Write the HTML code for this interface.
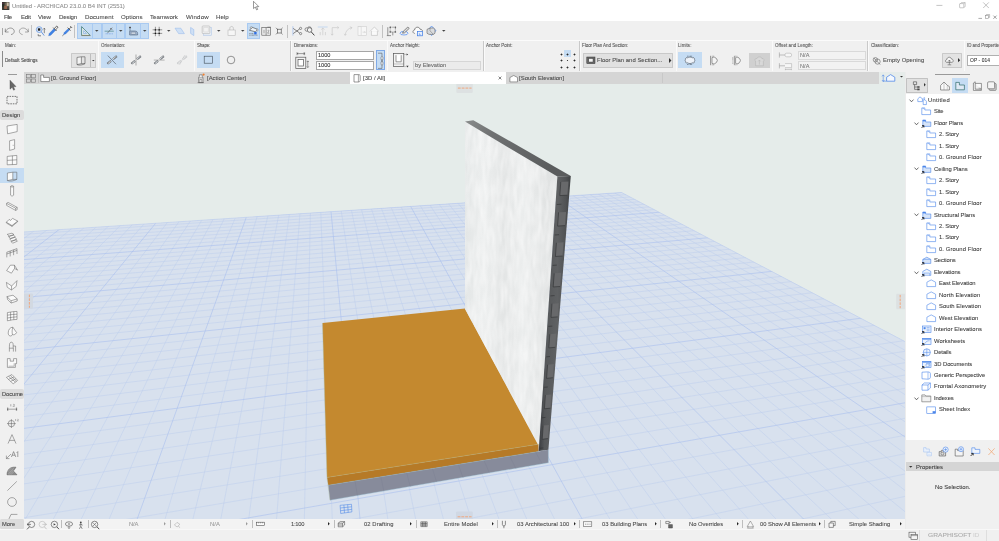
<!DOCTYPE html>
<html><head><meta charset="utf-8"><title>Untitled - ARCHICAD 23.0.0 B4 INT (2551)</title>
<style>
html,body{margin:0;padding:0;background:#f0f0f0;overflow:hidden}
#app{position:relative;width:999px;height:541px;overflow:hidden;background:#f0f0f0;font-family:"Liberation Sans",sans-serif}
.r{position:absolute;box-sizing:border-box}
.t{position:absolute;white-space:nowrap;transform-origin:0 0;-webkit-text-stroke:0.08px currentColor;font-family:"Liberation Sans",sans-serif}
svg{overflow:visible}
</style></head><body><div id="app">
<div class="r" style="left:0.00px;top:0.00px;width:999.00px;height:21.20px;background:#ffffff;"></div>
<div class="r" style="left:0.00px;top:21.20px;width:999.00px;height:50.80px;background:#f0f0f0;"></div>
<div class="r" style="left:0.00px;top:40.00px;width:999.00px;height:1.00px;background:#fbfbfb;"></div>
<div class="r" style="left:0.00px;top:72.00px;width:879.00px;height:11.60px;background:#d5d5d5;"></div>
<div class="r" style="left:0.00px;top:72.00px;width:24.00px;height:447.00px;background:#f0f0f0;"></div>
<div class="r" style="left:905.00px;top:72.00px;width:94.00px;height:457.00px;background:#f0f0f0;"></div>
<div class="r" style="left:0.00px;top:519.00px;width:905.00px;height:10.30px;background:#f0f0f0;"></div>
<div class="r" style="left:0.00px;top:529.00px;width:999.00px;height:12.00px;background:#f0f0f0;"></div>
<div class="r" style="left:879.00px;top:72.00px;width:26.30px;height:12.00px;background:#e6ecea;"></div>
<div class="r" style="left:24px;top:83.6px;width:881.2px;height:435.4px;background:#e5ecea;overflow:hidden"><svg width="881.2" height="435.4" viewBox="0 0 881.2 435.4" style="position:absolute;left:0;top:0;overflow:hidden"><defs>
<linearGradient id="wg" x1="0" y1="0" x2="1" y2="0"><stop offset="0" stop-color="#e3e6e6"/><stop offset="0.2" stop-color="#eceeee"/><stop offset="0.42" stop-color="#e3e5e5"/><stop offset="0.62" stop-color="#ebeded"/><stop offset="0.85" stop-color="#e2e4e4"/><stop offset="1" stop-color="#dfe1e1"/></linearGradient>
<linearGradient id="sg" x1="0" y1="0" x2="1" y2="0.04"><stop offset="0" stop-color="#34363a"/><stop offset="0.22" stop-color="#56585a"/><stop offset="0.6" stop-color="#5f6163"/><stop offset="0.85" stop-color="#505254"/><stop offset="1" stop-color="#3e4042"/></linearGradient>
<linearGradient id="tg" x1="0" y1="0" x2="1" y2="0.5"><stop offset="0" stop-color="#8a8c8c"/><stop offset="0.3" stop-color="#6f7172"/><stop offset="1" stop-color="#5a5c5d"/></linearGradient>
<filter id="tx" x="0" y="0" width="1" height="1"><feTurbulence type="fractalNoise" baseFrequency="0.22 0.05" numOctaves="2" seed="4"/><feColorMatrix type="matrix" values="0 0 0 0 1  0 0 0 0 1  0 0 0 0 1  1.8 0 0 0 -0.5"/><feComposite operator="in" in2="SourceGraphic"/></filter>
</defs><clipPath id="gc"><polygon points="0.0,148.0 597.6,108.5 881.2,257.7 881.2,435.4 0.0,435.4"/></clipPath><polygon points="0.0,148.0 597.6,108.5 881.2,257.7 881.2,435.4 0.0,435.4" fill="#d8e1ee"/><g clip-path="url(#gc)"><path d="M590.5 108.9L2836.6 1325.6M582.3 109.4L2758.6 1325.3M574.1 109.9L2680.6 1325.0M565.8 110.5L2602.7 1324.7M557.4 111.0L2524.7 1324.4M549.0 111.6L2446.7 1324.1M540.5 112.1L2368.7 1323.8M523.4 113.2L2212.7 1323.2M514.7 113.8L2134.8 1322.9M506.0 114.3L2056.8 1322.6M497.2 114.9L1978.8 1322.4M488.3 115.5L1900.8 1322.1M479.4 116.1L1822.8 1321.8M470.4 116.6L1744.8 1321.5M452.3 117.8L1588.9 1320.9M443.1 118.4L1510.9 1320.6M433.8 119.0L1432.9 1320.3M424.5 119.6L1354.9 1320.0M415.1 120.2L1276.9 1319.7M405.7 120.8L1198.9 1319.4M396.1 121.5L1121.0 1319.2M376.9 122.7L965.0 1318.6M367.1 123.3L887.0 1318.3M357.3 124.0L809.0 1318.0M347.4 124.6L731.0 1317.7M337.4 125.3L653.0 1317.4M327.4 125.9L575.1 1317.1M317.2 126.6L497.1 1316.8M296.8 127.9L341.1 1316.2M286.4 128.6L263.1 1316.0M276.0 129.2L185.1 1315.7M265.4 129.9L107.2 1315.4M254.8 130.6L29.2 1315.1M244.1 131.3L-48.8 1314.8M233.3 132.0L-126.8 1314.5M211.5 133.4L-282.8 1313.9M200.5 134.1L-360.8 1313.6M189.3 134.9L-438.7 1313.3M178.1 135.6L-516.7 1313.0M166.8 136.3L-594.7 1312.8M155.4 137.1L-672.7 1312.5M143.9 137.8L-750.7 1312.2M120.6 139.3L-906.6 1311.6M108.8 140.1L-984.6 1311.3M97.0 140.8L-1062.6 1311.0M85.0 141.6L-1140.6 1310.7M72.9 142.4L-1218.6 1310.4M60.7 143.2L-1296.6 1310.1M48.4 144.0L-1374.6 1309.8M23.5 145.6L-1530.5 1309.3M10.9 146.4L-1608.5 1309.0M-1.8 147.2L-1686.5 1308.7M-14.7 148.1L-1764.5 1308.4M-27.6 148.9L-1842.5 1308.1M-40.7 149.8L-1920.4 1307.8M-53.9 150.6L-1998.4 1307.5M-80.6 152.3L-2154.4 1306.9M-94.1 153.2L-2232.4 1306.6M-107.7 154.1L-2310.4 1306.4M-121.5 155.0L-2388.4 1306.1M-135.4 155.9L-2466.3 1305.8M-149.4 156.8L-2544.3 1305.5M-163.6 157.7L-2622.3 1305.2M-192.3 159.6L-2778.3 1304.6M-206.8 160.5L-2856.3 1304.3M-221.5 161.5L-2934.2 1304.0M-236.3 162.4L-3012.2 1303.7M-251.3 163.4L-3090.2 1303.4M-266.4 164.4L-3168.2 1303.2M-281.6 165.4L-3246.2 1302.9M-312.5 167.4L-3402.2 1302.3M-328.2 168.4L-3480.1 1302.0M-344.0 169.4L-3558.1 1301.7M-360.0 170.4L-3636.1 1301.4M-376.2 171.5L-3714.1 1301.1M-392.5 172.5L-3792.1 1300.8M-408.9 173.6L-3870.1 1300.5M-442.3 175.8L-4026.0 1300.0M-459.3 176.9L-4104.0 1299.7M-474.4 181.5L602.9 110.6M-490.2 186.4L607.3 112.9M-506.6 191.4L611.8 115.3M-523.7 196.7L616.5 117.7M-541.5 202.2L621.3 120.2M-560.2 208.0L626.2 122.8M-579.7 214.0L631.3 125.5M-621.6 226.9L641.9 131.1M-644.0 233.8L647.4 134.0M-667.7 241.1L653.2 137.0M-692.5 248.7L659.1 140.1M-718.7 256.8L665.2 143.3M-746.2 265.3L671.5 146.6M-775.4 274.2L678.1 150.1M-838.9 293.8L691.9 157.3M-873.6 304.5L699.1 161.2M-910.4 315.8L706.7 165.1M-949.7 327.9L714.5 169.2M-991.6 340.9L722.6 173.5M-1036.5 354.7L731.0 177.9M-1084.7 369.5L739.8 182.5M-1192.2 402.7L758.4 192.3M-1252.6 421.2L768.3 197.5M-1318.1 441.4L778.7 203.0M-1389.3 463.4L789.5 208.6M-1467.2 487.4L800.7 214.6M-1552.7 513.7L812.5 220.8M-1646.9 542.7L824.9 227.3M-1867.5 610.7L851.4 241.2M-1997.8 650.8L865.7 248.7M-2144.9 696.1L880.7 256.6M-2312.1 747.7L896.6 265.0M-2504.1 806.8L913.3 273.7M-2726.5 875.3L931.0 283.0M-2987.5 955.7L949.6 292.8M-3673.3 1167.0L990.5 314.3M-4084.6 1299.7L1012.9 326.1M-3776.0 1300.9L1036.7 338.6M-3467.4 1302.0L1062.2 352.0M-3158.8 1303.2L1089.5 366.4M-2850.2 1304.3L1118.8 381.8M-2541.6 1305.5L1150.3 398.3M-1924.4 1307.8L1221.1 435.5M-1615.8 1308.9L1261.0 456.6M-1307.2 1310.1L1304.6 479.4M-998.6 1311.2L1352.2 504.5M-690.0 1312.4L1404.5 532.0M-381.4 1313.6L1462.3 562.3M-72.8 1314.7L1526.3 596.0M544.4 1317.0L1678.0 675.8M852.9 1318.2L1768.7 723.4M1161.5 1319.3L1872.1 777.8M1470.1 1320.5L1991.0 840.3M1778.7 1321.6L2129.3 913.0M2087.3 1322.8L2292.1 998.6M2395.9 1323.9L2486.4 1100.7" stroke="#b9cbee" stroke-width="0.45" fill="none"/><path d="M598.7 108.3L2914.6 1325.8M532.0 112.7L2290.7 1323.5M461.4 117.2L1666.8 1321.2M386.5 122.1L1043.0 1318.9M307.0 127.2L419.1 1316.5M222.5 132.7L-204.8 1314.2M132.3 138.5L-828.7 1311.9M36.0 144.8L-1452.5 1309.6M-67.1 151.5L-2076.4 1307.2M-177.8 158.6L-2700.3 1304.9M-297.0 166.4L-3324.2 1302.6M-425.6 174.7L-3948.0 1300.2M-459.3 176.9L598.7 108.3M-600.2 220.3L636.5 128.2M-806.2 283.7L684.9 153.7M-1136.4 385.5L748.9 187.3M-1751.3 574.9L837.8 234.1M-3297.9 1051.3L969.4 303.3M-2233.0 1306.6L1184.3 416.2M235.8 1315.9L1597.8 633.6M2704.5 1325.1L2722.5 1224.9" stroke="#a9bfee" stroke-width="0.6" fill="none"/></g><path d="M0.0 148.0L597.6 108.5L881.2 257.7" stroke="#b4c7ee" stroke-width="0.5" fill="none"/><polygon points="298.5,239.1 441.0,224.4 514.4,360.2 303.0,393.4" fill="#c4892f" /><polygon points="441.0,37.6 533.4,92.6 515.2,362.4 513.8,360.3 441.0,224.9" fill="url(#wg)" /><polygon points="441.0,37.6 533.4,92.6 515.2,362.4 513.8,360.3 441.0,224.9" fill="#fff" filter="url(#tx)" opacity="0.5"/><polygon points="303.0,393.4 514.5,360.2 514.5,367.5 304.3,401.2" fill="#b67a27" /><polygon points="304.3,401.2 514.5,367.5 524.4,365.7 524.4,378.8 306.0,416.2" fill="#878b9b" /><path d="M331.1 397.1L333.4 411.7M356.9 392.9L359.8 407.2M382.7 388.8L386.2 402.6M408.5 384.7L412.6 398.1M434.3 380.5L439.0 393.6M460.0 376.4L465.4 389.1M485.8 372.3L491.8 384.6M511.6 368.1L518.2 380.0" stroke="#7d8294" stroke-width="0.5" fill="none"/><path d="M303.0 393.4L514.5 360.2" stroke="#b5b27a" stroke-width="0.4"/><path d="M304.3 401.2L514.5 367.5" stroke="#8fb6c0" stroke-width="0.4"/><path d="M306.0 416.2L524.4 378.8L524.4 366.0" stroke="#9fc4d6" stroke-width="0.4" fill="none"/><path d="M298.5 239.1L303.0 393.4L306.0 416.2" stroke="#a9b8a0" stroke-width="0.4" fill="none"/><polygon points="533.4,92.6 546.8,91.9 524.4,365.7 514.7,366.9" fill="url(#sg)" /><polygon points="536.8,97.9 544.5,97.5 543.4,111.2 535.8,111.6" fill="#68696b"/><polygon points="534.6,128.3 542.1,127.9 541.0,141.6 533.6,142.1" fill="#68696b"/><polygon points="532.4,158.8 539.6,158.3 538.5,172.0 531.4,172.5" fill="#68696b"/><polygon points="530.2,189.3 537.2,188.8 536.1,202.5 529.2,203.0" fill="#68696b"/><polygon points="528.0,219.7 534.8,219.2 533.7,232.9 527.0,233.4" fill="#68696b"/><polygon points="525.8,250.2 532.3,249.6 531.2,263.3 524.8,263.9" fill="#68696b"/><polygon points="523.6,280.7 529.9,280.1 528.8,293.7 522.6,294.4" fill="#68696b"/><polygon points="521.4,311.1 527.5,310.5 526.4,324.2 520.4,324.8" fill="#68696b"/><polygon points="519.2,341.6 525.0,340.9 523.9,354.6 518.2,355.3" fill="#68696b"/><path d="M536.8 97.9L535.8 111.6L543.4 111.2M532.8 120.5L537.4 120.2M534.6 128.3L533.6 142.1L541.0 141.6M530.7 151.0L535.1 150.7M532.4 158.8L531.4 172.5L538.5 172.0M528.6 181.4L532.8 181.1M530.2 189.3L529.2 203.0L536.1 202.5M526.4 211.9L530.6 211.6M528.0 219.7L527.0 233.4L533.7 232.9M524.3 242.4L528.3 242.1M525.8 250.2L524.8 263.9L531.2 263.3M522.2 272.9L526.0 272.5M523.6 280.7L522.6 294.4L528.8 293.7M520.1 303.3L523.8 303.0M521.4 311.1L520.4 324.8L526.4 324.2M518.0 333.8L521.5 333.4M519.2 341.6L518.2 355.3L523.9 354.6M515.8 364.3L519.3 363.9" stroke="#2f3133" stroke-width="0.6" fill="none"/><polygon points="441.0,37.6 449.3,36.2 546.8,91.9 533.4,92.6" fill="url(#tg)" /><rect x="432.3" y="-1.6" width="16.5" height="10.5" rx="1.2" fill="#dde1e2"/><path d="M433.9 4.1H447.6" stroke="#f4a273" stroke-width="0.9" stroke-dasharray="2.8 1"/><rect x="432.0" y="427.4" width="16.8" height="10.0" rx="1.2" fill="#d0d8e4"/><path d="M433.6 432.8H447.6" stroke="#f4a273" stroke-width="0.9" stroke-dasharray="2.8 1"/><rect x="-2.0" y="209.4" width="11.0" height="15.4" rx="1.2" fill="#d2d9e2"/><path d="M5.4 210.6V223.8" stroke="#f4a273" stroke-width="0.9" stroke-dasharray="2.6 1.1"/><rect x="872.2" y="209.7" width="10.8" height="15.5" rx="1.2" fill="#dde1e2"/><path d="M876.2 210.9V224.2" stroke="#f4a273" stroke-width="0.9" stroke-dasharray="2.6 1.1"/><g transform="translate(315.5 419.7)" fill="none" stroke="#4c86e8" stroke-width="0.55"><path d="M0.6 1.6L12 0.6L12.4 8.2L1.2 9.8ZM0.8 4.3L12.1 3.1M1 7L12.3 5.7M4.4 1.3L5 9.3M8.2 0.9L8.7 8.8"/></g></svg></div>
<svg class="r" style="left:1.80px;top:2.00px;" width="7.4" height="7.8" viewBox="0 0 7.4 7.8"><rect x="0" y="0" width="7.4" height="7.8" fill="#3a3a33"/><rect x="0.3" y="0.4" width="2.2" height="4.4" fill="#2b3128"/><rect x="4.4" y="0.4" width="2.4" height="4" fill="#cfc2ad"/><rect x="2.6" y="0.6" width="1.8" height="3" fill="#6e6454"/><rect x="2.2" y="3.6" width="3" height="3.8" fill="#96664e"/><rect x="5.2" y="4.4" width="1.6" height="3" fill="#55504a"/><rect x="0.5" y="0.8" width="0.9" height="0.9" fill="#9c2f6a"/><rect x="0.3" y="7" width="6.8" height="0.8" fill="#2a2a26"/></svg>
<span class="t" style="left:11.70px;top:3.00px;font-size:5.59px;line-height:6px;color:#8e8e8e;letter-spacing:-0.005px;transform:scaleX(1.0638);">Untitled - ARCHICAD 23.0.0 B4 INT (2551)</span>
<svg class="r" style="left:930.00px;top:0.00px;" width="69" height="12" viewBox="0 0 69 12"><path d="M6.4 5.4H12.4" stroke="#9a9a9a" stroke-width="0.6"/><rect x="29.6" y="3.6" width="4.2" height="4.2" rx="0.5" fill="none" stroke="#9a9a9a" stroke-width="0.55"/><path d="M30.6 3.6L31.4 2.6H35.2V6.6L33.8 7.4M33.8 3.6L35.2 2.6" fill="none" stroke="#9a9a9a" stroke-width="0.5"/><path d="M53.2 2.4L58.8 8M58.8 2.4L53.2 8" stroke="#9a9a9a" stroke-width="0.6"/></svg>
<svg class="r" style="left:252.50px;top:0.50px;" width="7" height="10" viewBox="0 0 7 10"><path d="M0.5 0.3V7.6L2.3 6L3.6 8.9L4.7 8.4L3.5 5.6H5.8Z" fill="#fff" stroke="#555" stroke-width="0.6" stroke-linejoin="round"/></svg>
<span class="t" style="left:4.30px;top:14.00px;font-size:5.78px;line-height:6px;color:#4a4a4a;letter-spacing:-0.504px;transform:scaleX(1.0638);">File</span>
<span class="t" style="left:20.50px;top:14.00px;font-size:5.78px;line-height:6px;color:#4a4a4a;letter-spacing:-0.218px;transform:scaleX(1.0638);">Edit</span>
<span class="t" style="left:38.00px;top:14.00px;font-size:5.78px;line-height:6px;color:#4a4a4a;letter-spacing:-0.069px;transform:scaleX(1.0638);">View</span>
<span class="t" style="left:58.50px;top:14.00px;font-size:5.78px;line-height:6px;color:#4a4a4a;letter-spacing:-0.158px;transform:scaleX(1.0638);">Design</span>
<span class="t" style="left:84.80px;top:14.00px;font-size:5.78px;line-height:6px;color:#4a4a4a;letter-spacing:0.063px;transform:scaleX(1.0638);">Document</span>
<span class="t" style="left:120.80px;top:14.00px;font-size:5.78px;line-height:6px;color:#4a4a4a;letter-spacing:0.079px;transform:scaleX(1.0638);">Options</span>
<span class="t" style="left:150.00px;top:14.00px;font-size:5.78px;line-height:6px;color:#4a4a4a;letter-spacing:-0.003px;transform:scaleX(1.0638);">Teamwork</span>
<span class="t" style="left:185.50px;top:14.00px;font-size:5.78px;line-height:6px;color:#4a4a4a;letter-spacing:0.174px;transform:scaleX(1.0638);">Window</span>
<span class="t" style="left:215.80px;top:14.00px;font-size:5.78px;line-height:6px;color:#4a4a4a;letter-spacing:0.048px;transform:scaleX(1.0638);">Help</span>
<svg class="r" style="left:977.00px;top:13.00px;" width="22" height="8" viewBox="0 0 22 8"><path d="M1.4 5.4H5" stroke="#8a8a8a" stroke-width="0.7"/><rect x="8.4" y="2.4" width="3.2" height="3" fill="none" stroke="#8a8a8a" stroke-width="0.55"/><path d="M9.4 2.4V1.5H12.6V4.4H11.6" fill="none" stroke="#8a8a8a" stroke-width="0.5"/><path d="M16.4 2.6L19.6 5.8M19.6 2.6L16.4 5.8" stroke="#777" stroke-width="0.7"/></svg>
<div class="r" style="left:2.10px;top:27.50px;width:0.60px;height:7.00px;background:#a8a8a8;"></div>
<svg class="r" style="left:4.00px;top:26.00px;" width="26" height="10" viewBox="0 0 26 10"><path d="M1.4 2.6L1.2 6L4.6 6M1.3 5.9C2.8 2.6 5.8 1.4 8.2 2.4C11.2 3.8 11 7.8 7 8.6" fill="none" stroke="#6a6a6a" stroke-width="0.65"/><path d="M24.2 2.6L24.4 6L21 6M24.3 5.9C22.8 2.6 19.8 1.4 17.4 2.4C14.4 3.8 14.6 7.8 18.6 8.6" fill="none" stroke="#808080" stroke-width="0.65"/></svg>
<div class="r" style="left:30.50px;top:24.50px;width:0.60px;height:13.00px;background:#c2c2c2;"></div>
<svg class="r" style="left:35.00px;top:25.00px;" width="12" height="12" viewBox="0 0 12 12"><circle cx="4.2" cy="4.6" r="2.9" fill="#dfeaf8" stroke="#5a8fe0" stroke-width="0.7"/><rect x="2.9" y="3.3" width="2.4" height="2.4" fill="#222"/><path d="M6.3 6.8L9.2 10.6" stroke="#5a8fe0" stroke-width="0.9"/><path d="M9.3 3.4V8.2M8.3 4.3L9.3 3.2L10.3 4.3" stroke="#444" stroke-width="0.6" fill="none"/><path d="M3.2 9.2V10.8H6" stroke="#333" stroke-width="0.6" fill="none"/></svg>
<svg class="r" style="left:47.00px;top:25.00px;" width="12" height="12" viewBox="0 0 12 12"><path d="M1.6 10.8L2.2 8.6L7 3.6L8.6 5.2L3.8 10.2Z" fill="#3f83e6" stroke="#2a62c0" stroke-width="0.3"/><path d="M6.2 2.6L9.6 6M7.4 3.6L9.2 1.4C9.9 0.7 11.4 2 10.6 2.9L8.6 4.8" fill="none" stroke="#444" stroke-width="0.8"/></svg>
<svg class="r" style="left:61.00px;top:25.00px;" width="12" height="12" viewBox="0 0 12 12"><path d="M1.2 11L3 9.4" stroke="#555" stroke-width="0.6"/><path d="M2.6 9.6L3.2 7.6L7.4 3.4L8.8 4.8L4.6 9Z" fill="#3f83e6" stroke="#2a62c0" stroke-width="0.3"/><path d="M6.6 2.6L9.6 5.6M8.2 4L10.2 2M9.2 1L11.2 3" fill="none" stroke="#444" stroke-width="0.75"/></svg>
<div class="r" style="left:74.30px;top:24.50px;width:0.60px;height:13.00px;background:#c2c2c2;"></div>
<div class="r" style="left:77.30px;top:23.00px;width:24.50px;height:15.60px;background:#c5dcf3;border:0.5px solid #a9caf1"></div>
<div class="r" style="left:92.35px;top:23.00px;width:0.50px;height:15.60px;background:#a9caf1;"></div>
<svg class="r" style="left:95.30px;top:30.12px;" width="3.5" height="1.75" viewBox="0 0 3.5 1.75"><path d="M0 0H3.5L1.75 1.75Z" fill="#444"/></svg>
<div class="r" style="left:101.50px;top:23.00px;width:23.50px;height:15.60px;background:#c5dcf3;border:0.5px solid #a9caf1"></div>
<div class="r" style="left:116.35px;top:23.00px;width:0.50px;height:15.60px;background:#a9caf1;"></div>
<svg class="r" style="left:118.90px;top:30.12px;" width="3.5" height="1.75" viewBox="0 0 3.5 1.75"><path d="M0 0H3.5L1.75 1.75Z" fill="#444"/></svg>
<div class="r" style="left:124.70px;top:23.00px;width:24.50px;height:15.60px;background:#c5dcf3;border:0.5px solid #a9caf1"></div>
<div class="r" style="left:140.15px;top:23.00px;width:0.50px;height:15.60px;background:#a9caf1;"></div>
<svg class="r" style="left:142.90px;top:30.12px;" width="3.5" height="1.75" viewBox="0 0 3.5 1.75"><path d="M0 0H3.5L1.75 1.75Z" fill="#444"/></svg>
<svg class="r" style="left:79.00px;top:25.00px;" width="12" height="12" viewBox="0 0 12 12"><path d="M2.6 1.6V10.4H11.2Z" fill="#e8f0ee" stroke="#3d7a78" stroke-width="0.8" stroke-linejoin="round"/><path d="M4.6 5.6V8.6H7.6Z" fill="none" stroke="#5a8fe0" stroke-width="0.5"/><path d="M2.4 10.6H11.4" stroke="#b06a30" stroke-width="0.4"/></svg>
<svg class="r" style="left:103.00px;top:25.00px;" width="12" height="12" viewBox="0 0 12 12"><path d="M1.6 6.2H10.8" stroke="#3d7a78" stroke-width="0.6"/><path d="M4.4 8.2L9.2 2.6M7 3.2L9.4 4.6" stroke="#555" stroke-width="0.6"/><path d="M2.6 8.8H9.8" stroke="#5a8fe0" stroke-width="0.6" stroke-dasharray="1 0.6"/></svg>
<svg class="r" style="left:126.50px;top:25.00px;" width="12" height="12" viewBox="0 0 12 12"><rect x="2.2" y="1.8" width="1.6" height="1.4" fill="#333"/><path d="M3 3V6H7.6C10.2 6 10.6 7.4 10.6 8.4V10H2.6V6" fill="#9fb4cf" stroke="#55657a" stroke-width="0.6"/><rect x="4.2" y="7.2" width="4.4" height="1.8" rx="0.6" fill="#e6edf6" stroke="#55657a" stroke-width="0.4"/></svg>
<svg class="r" style="left:152.00px;top:25.50px;" width="11" height="11" viewBox="0 0 11 11"><path d="M3.4 0.8V10.2M7.2 0.8V10.2M0.6 3.8H10.2M0.6 7.4H10.2" stroke="#444" stroke-width="0.55"/><path d="M3.4 3.8h0M7.2 7.4h0M3.4 7.4h0M7.2 3.8h0" stroke="#111" stroke-width="1.3" stroke-linecap="square"/></svg>
<svg class="r" style="left:167.05px;top:30.12px;" width="3.5" height="1.75" viewBox="0 0 3.5 1.75"><path d="M0 0H3.5L1.75 1.75Z" fill="#444"/></svg>
<svg class="r" style="left:173.50px;top:27.00px;" width="12" height="8" viewBox="0 0 12 8"><path d="M1 1.2H6.8L10.4 6.6H4.6Z" fill="#cfe0f5" stroke="#8fb4ea" stroke-width="0.5"/></svg>
<svg class="r" style="left:189.00px;top:25.50px;" width="7" height="11" viewBox="0 0 7 11"><path d="M1.6 1.4L4.8 3.6V9.6L1.6 7.4Z" fill="#cfe0f5" stroke="#8fb4ea" stroke-width="0.5"/></svg>
<svg class="r" style="left:201.00px;top:25.00px;" width="13" height="12" viewBox="0 0 13 12"><rect x="2.6" y="2.4" width="8" height="8" fill="#e6edf6" stroke="#a9c2e6" stroke-width="0.5"/><rect x="1.2" y="1" width="7.6" height="7.6" rx="0.8" fill="#f2f2f2" stroke="#b4b4b4" stroke-width="0.6"/><rect x="2.8" y="2.6" width="4.4" height="4.4" fill="none" stroke="#cfcfcf" stroke-width="0.5"/></svg>
<svg class="r" style="left:216.85px;top:30.12px;" width="3.5" height="1.75" viewBox="0 0 3.5 1.75"><path d="M0 0H3.5L1.75 1.75Z" fill="#444"/></svg>
<svg class="r" style="left:226.00px;top:25.00px;" width="12" height="12" viewBox="0 0 12 12"><path d="M3.8 5V3.4C3.8 0.8 7.4 0.8 7.4 3.4V5" fill="none" stroke="#b9b9b9" stroke-width="0.7"/><rect x="2" y="5" width="7.2" height="5.6" fill="#f6f6f6" stroke="#b9b9b9" stroke-width="0.6"/></svg>
<svg class="r" style="left:240.85px;top:30.12px;" width="3.5" height="1.75" viewBox="0 0 3.5 1.75"><path d="M0 0H3.5L1.75 1.75Z" fill="#444"/></svg>
<div class="r" style="left:246.60px;top:23.00px;width:13.30px;height:15.60px;background:#c5dcf3;border:0.5px solid #a9caf1"></div>
<svg class="r" style="left:247.50px;top:25.00px;" width="12" height="12" viewBox="0 0 12 12"><path d="M1.4 5.2L4.4 2.4L9.8 4.4L7.4 6.8Z" fill="#eef3f8" stroke="#444" stroke-width="0.6"/><circle cx="3.2" cy="2.6" r="0.9" fill="#fff" stroke="#444" stroke-width="0.4"/><circle cx="9.2" cy="5" r="0.9" fill="#fff" stroke="#444" stroke-width="0.4"/><rect x="6.2" y="7" width="2.4" height="2.4" fill="#2f6fe4"/><path d="M1.4 8.6H5.6M1.4 10.2H9.6" stroke="#444" stroke-width="0.6" stroke-dasharray="0.8 0.5"/></svg>
<svg class="r" style="left:261.00px;top:25.50px;" width="11" height="11" viewBox="0 0 11 11"><rect x="0.8" y="1.6" width="8.6" height="7.6" fill="none" stroke="#555" stroke-width="0.6"/><path d="M5.1 1.6V9.2M6.4 1.2H9.8" stroke="#555" stroke-width="0.6"/><path d="M3 3.8V7.4M6.6 4.6C7.4 3.6 8.4 4.4 7.6 5.4L6.6 7.2H8.4" fill="none" stroke="#555" stroke-width="0.5"/></svg>
<svg class="r" style="left:275.00px;top:26.50px;" width="9" height="9" viewBox="0 0 9 9"><rect x="2.4" y="2.2" width="3.8" height="3.8" fill="none" stroke="#444" stroke-width="0.6"/><path d="M2.4 2.2L1 0.8M6.2 2.2L7.6 0.8M2.4 6L1 7.4M6.2 6L7.6 7.4" stroke="#444" stroke-width="0.6"/></svg>
<div class="r" style="left:286.70px;top:24.50px;width:0.60px;height:13.00px;background:#c2c2c2;"></div>
<svg class="r" style="left:291.50px;top:25.00px;" width="11" height="12" viewBox="0 0 11 12"><path d="M0.9 1.2V10.6" stroke="#7aa7ea" stroke-width="0.5"/><path d="M1.2 3.4L7.6 8M1.2 8.6L7.6 4" stroke="#444" stroke-width="0.65"/><circle cx="8.6" cy="3.4" r="1.1" fill="none" stroke="#444" stroke-width="0.55"/><circle cx="8.6" cy="8.6" r="1.1" fill="none" stroke="#444" stroke-width="0.55"/></svg>
<svg class="r" style="left:303.50px;top:25.00px;" width="12" height="12" viewBox="0 0 12 12"><path d="M1 4.6C1 2.6 2.6 2.8 3.4 3C4 1.4 7.4 1.4 7.4 3.8" fill="none" stroke="#444" stroke-width="0.6"/><circle cx="5.6" cy="5" r="2.3" fill="#f4f4f4" stroke="#444" stroke-width="0.65"/><path d="M7.2 6.8L10.4 10.4" stroke="#444" stroke-width="1"/><path d="M1 4.6C1.2 6 2.4 6.4 3.4 6.2" fill="none" stroke="#444" stroke-width="0.6"/></svg>
<svg class="r" style="left:316.50px;top:25.00px;" width="12" height="12" viewBox="0 0 12 12"><path d="M0.8 2H10.6" stroke="#a9caf1" stroke-width="0.6"/><path d="M5.8 3V10.2M4.2 4.6L5.8 3L7.4 4.6M3.2 7V10.2M8.4 7V10.2" fill="none" stroke="#c4c4c4" stroke-width="0.6"/></svg>
<svg class="r" style="left:329.50px;top:25.00px;" width="12" height="12" viewBox="0 0 12 12"><path d="M2.2 10.2V2.6H8.6M1 8.8L2.2 10.2L3.4 8.8M7.4 1.4L8.8 2.6L7.4 3.8" fill="none" stroke="#c4c4c4" stroke-width="0.6"/></svg>
<svg class="r" style="left:342.50px;top:25.00px;" width="12" height="12" viewBox="0 0 12 12"><path d="M2.2 10.2C2.6 6 5 3.4 8.8 2.6M6.8 1.8L9 2.6L7.6 4.4M1.2 8.8L2.2 10.4L3.4 9" fill="none" stroke="#c4c4c4" stroke-width="0.6"/></svg>
<svg class="r" style="left:356.50px;top:25.00px;" width="12" height="12" viewBox="0 0 12 12"><rect x="1" y="1.6" width="8.4" height="8.8" fill="#f7f7f7" stroke="#cfcfcf" stroke-width="0.6"/><path d="M1 1.6H4.2V10.4" fill="none" stroke="#d2d2d2" stroke-width="0.6"/><path d="M5.6 7.2H8.4M7.4 6.2L8.4 7.2L7.4 8.2" fill="none" stroke="#c4c4c4" stroke-width="0.5"/></svg>
<svg class="r" style="left:369.00px;top:25.00px;" width="12" height="12" viewBox="0 0 12 12"><path d="M1 6.4L5.4 2L9.8 6.4M2.4 6V10.4H8.4V6" fill="#fafafa" stroke="#b9b9b9" stroke-width="0.6"/></svg>
<div class="r" style="left:382.30px;top:24.50px;width:0.60px;height:13.00px;background:#c2c2c2;"></div>
<svg class="r" style="left:385.50px;top:25.00px;" width="12" height="12" viewBox="0 0 12 12"><path d="M1.8 2.2V10.6M0.8 10.6H5" stroke="#555" stroke-width="0.6"/><rect x="4.2" y="2.2" width="5.2" height="4.8" fill="#eee" stroke="#555" stroke-width="0.55" stroke-dasharray="1 0.5"/><circle cx="4.2" cy="2.2" r="0.8" fill="#555"/><circle cx="9.4" cy="2.2" r="0.8" fill="#555"/><circle cx="4.2" cy="7" r="0.8" fill="#555"/><circle cx="9.4" cy="7" r="0.8" fill="#555"/><path d="M6.8 7V10.4" stroke="#555" stroke-width="0.6"/></svg>
<svg class="r" style="left:399.00px;top:25.00px;" width="12" height="12" viewBox="0 0 12 12"><ellipse cx="5" cy="8.2" rx="4" ry="1.8" fill="none" stroke="#4c8af0" stroke-width="0.7"/><path d="M3.6 8.2L4.2 6.4L8.8 2L10.2 3.4L5.6 7.8Z" fill="#ddd" stroke="#444" stroke-width="0.6"/></svg>
<svg class="r" style="left:411.50px;top:25.00px;" width="12" height="12" viewBox="0 0 12 12"><path d="M2.8 8.4C0.4 8.4 0.4 5 2.6 5C2.6 1.6 7.4 1.2 8 4.2C10.4 4.2 10.6 6 10.4 6.6" fill="#fbfbfb" stroke="#444" stroke-width="0.6"/><rect x="5.6" y="6.6" width="5" height="4.2" fill="#e6effc" stroke="#3d7be6" stroke-width="0.7"/><path d="M7.4 8.2V9.8H8.8" fill="none" stroke="#3d7be6" stroke-width="0.5"/></svg>
<svg class="r" style="left:426.00px;top:25.00px;" width="12" height="12" viewBox="0 0 12 12"><path d="M5.6 1L9.8 5.6L5.6 10.6L1.6 5.6Z" fill="#dfe9f8" stroke="#4c8af0" stroke-width="0.7"/><path d="M1 4.4L4 3H7.4L9 4.4V8.2L7.4 9.4H3L1 8.2Z" fill="#d9d9d9" stroke="#555" stroke-width="0.55" fill-opacity="0.85"/><path d="M4 3V5.8L7.4 9.4" fill="none" stroke="#555" stroke-width="0.4"/></svg>
<svg class="r" style="left:442.45px;top:30.12px;" width="3.5" height="1.75" viewBox="0 0 3.5 1.75"><path d="M0 0H3.5L1.75 1.75Z" fill="#444"/></svg>
<div class="r" style="left:97.50px;top:41.00px;width:0.60px;height:30.00px;background:#c9c9c9;"></div>
<div class="r" style="left:98.10px;top:41.00px;width:0.60px;height:30.00px;background:#fafafa;"></div>
<div class="r" style="left:193.60px;top:41.00px;width:0.60px;height:30.00px;background:#c9c9c9;"></div>
<div class="r" style="left:194.20px;top:41.00px;width:0.60px;height:30.00px;background:#fafafa;"></div>
<div class="r" style="left:290.30px;top:41.00px;width:0.60px;height:30.00px;background:#c9c9c9;"></div>
<div class="r" style="left:290.90px;top:41.00px;width:0.60px;height:30.00px;background:#fafafa;"></div>
<div class="r" style="left:386.70px;top:41.00px;width:0.60px;height:30.00px;background:#c9c9c9;"></div>
<div class="r" style="left:387.30px;top:41.00px;width:0.60px;height:30.00px;background:#fafafa;"></div>
<div class="r" style="left:482.90px;top:41.00px;width:0.60px;height:30.00px;background:#c9c9c9;"></div>
<div class="r" style="left:483.50px;top:41.00px;width:0.60px;height:30.00px;background:#fafafa;"></div>
<div class="r" style="left:579.30px;top:41.00px;width:0.60px;height:30.00px;background:#c9c9c9;"></div>
<div class="r" style="left:579.90px;top:41.00px;width:0.60px;height:30.00px;background:#fafafa;"></div>
<div class="r" style="left:675.50px;top:41.00px;width:0.60px;height:30.00px;background:#c9c9c9;"></div>
<div class="r" style="left:676.10px;top:41.00px;width:0.60px;height:30.00px;background:#fafafa;"></div>
<div class="r" style="left:771.70px;top:41.00px;width:0.60px;height:30.00px;background:#c9c9c9;"></div>
<div class="r" style="left:772.30px;top:41.00px;width:0.60px;height:30.00px;background:#fafafa;"></div>
<div class="r" style="left:867.40px;top:41.00px;width:0.60px;height:30.00px;background:#c9c9c9;"></div>
<div class="r" style="left:868.00px;top:41.00px;width:0.60px;height:30.00px;background:#fafafa;"></div>
<div class="r" style="left:963.70px;top:41.00px;width:0.60px;height:30.00px;background:#c9c9c9;"></div>
<div class="r" style="left:964.30px;top:41.00px;width:0.60px;height:30.00px;background:#fafafa;"></div>
<span class="t" style="left:4.60px;top:43.00px;font-size:4.63px;line-height:5px;color:#555;letter-spacing:-0.027px;transform:scaleX(0.9709);">Main:</span>
<span class="t" style="left:101.00px;top:43.00px;font-size:4.63px;line-height:5px;color:#555;letter-spacing:0.107px;transform:scaleX(0.9709);">Orientation:</span>
<span class="t" style="left:197.20px;top:43.00px;font-size:4.63px;line-height:5px;color:#555;letter-spacing:-0.198px;transform:scaleX(0.9709);">Shape:</span>
<span class="t" style="left:293.60px;top:43.00px;font-size:4.63px;line-height:5px;color:#555;letter-spacing:-0.088px;transform:scaleX(0.9709);">Dimensions:</span>
<span class="t" style="left:390.00px;top:43.00px;font-size:4.63px;line-height:5px;color:#555;letter-spacing:0.003px;transform:scaleX(0.9709);">Anchor Height:</span>
<span class="t" style="left:486.20px;top:43.00px;font-size:4.63px;line-height:5px;color:#555;letter-spacing:-0.036px;transform:scaleX(0.9709);">Anchor Point:</span>
<span class="t" style="left:582.30px;top:43.00px;font-size:4.63px;line-height:5px;color:#555;letter-spacing:-0.034px;transform:scaleX(0.9709);">Floor Plan And Section:</span>
<span class="t" style="left:678.40px;top:43.00px;font-size:4.63px;line-height:5px;color:#555;letter-spacing:0.069px;transform:scaleX(0.9709);">Limits:</span>
<span class="t" style="left:775.00px;top:43.00px;font-size:4.63px;line-height:5px;color:#555;letter-spacing:0.064px;transform:scaleX(0.9709);">Offset and Length:</span>
<span class="t" style="left:871.00px;top:43.00px;font-size:4.63px;line-height:5px;color:#555;letter-spacing:0.032px;transform:scaleX(0.9709);">Classification:</span>
<span class="t" style="left:967.40px;top:43.00px;font-size:4.63px;line-height:5px;color:#555;letter-spacing:-0.040px;transform:scaleX(0.9709);">ID and Properties:</span>
<div class="r" style="left:2.20px;top:51.00px;width:0.60px;height:15.50px;background:#8a8a8a;"></div>
<span class="t" style="left:4.60px;top:58.00px;font-size:4.79px;line-height:5px;color:#444;letter-spacing:-0.009px;transform:scaleX(0.9709);">Default Settings</span>
<div class="r" style="left:71.00px;top:53.00px;width:24.60px;height:14.60px;background:#e3e3e3;border:0.5px solid #c9c9c9;border-radius:0.6px"></div>
<div class="r" style="left:89.70px;top:54.00px;width:0.50px;height:12.60px;background:#bdbdbd;"></div>
<svg class="r" style="left:91.60px;top:59.65px;" width="2.6" height="1.3" viewBox="0 0 2.6 1.3"><path d="M0 0H2.6L1.3 1.3Z" fill="#333"/></svg>
<svg class="r" style="left:75.00px;top:54.50px;" width="12" height="12" viewBox="0 0 12 12"><path d="M2 2.4L6.4 1.8V8.6L2 9.6Z" fill="#f4f4f4" stroke="#555" stroke-width="0.6"/><path d="M6.4 1.8H10V8.6H6.4M2 9.6C4 10.6 8 10 10 8.6" fill="none" stroke="#555" stroke-width="0.6"/></svg>
<div class="r" style="left:101.00px;top:52.00px;width:22.70px;height:15.70px;background:#c5dcf3;"></div>
<svg class="r" style="left:106.30px;top:54.20px;" width="12" height="12" viewBox="0 0 12 12"><g opacity="1"><path d="M1.4 9.8L5 6.9M7 5.2L10.8 2.1" stroke="#5d6268" stroke-width="2.1"/><path d="M1.9 9.4L4.8 7.1M7.2 5L10.3 2.5" stroke="#eef1f3" stroke-width="1.15" stroke-dasharray="1 0.55"/><path d="M1.8 1.6L10 10.2" stroke="#4a4f55" stroke-width="0.6"/></g></svg>
<svg class="r" style="left:129.50px;top:54.20px;" width="12" height="12" viewBox="0 0 12 12"><g opacity="1"><path d="M6 0.6V11.4" stroke="#c4c4c4" stroke-width="1.6"/><path d="M1.4 9.8L5 6.9M7 5.2L10.8 2.1" stroke="#5d6268" stroke-width="2.1"/><path d="M1.9 9.4L4.8 7.1M7.2 5L10.3 2.5" stroke="#eef1f3" stroke-width="1.15" stroke-dasharray="1 0.55"/></g></svg>
<svg class="r" style="left:152.60px;top:54.20px;" width="12" height="12" viewBox="0 0 12 12"><g opacity="1"><path d="M0.8 6.1H11.6" stroke="#c4c4c4" stroke-width="1.4"/><path d="M1.4 9.8L5 6.9M7 5.2L10.8 2.1" stroke="#5d6268" stroke-width="2.1"/><path d="M1.9 9.4L4.8 7.1M7.2 5L10.3 2.5" stroke="#eef1f3" stroke-width="1.15" stroke-dasharray="1 0.55"/></g></svg>
<svg class="r" style="left:176.00px;top:54.20px;" width="12" height="12" viewBox="0 0 12 12"><g opacity="0.3"><path d="M1.4 9.8L5 6.9M7 5.2L10.8 2.1" stroke="#5d6268" stroke-width="2.1"/><path d="M1.9 9.4L4.8 7.1M7.2 5L10.3 2.5" stroke="#eef1f3" stroke-width="1.15" stroke-dasharray="1 0.55"/><path d="M3.6 10.8L8.6 1.2" stroke="#4a4f55" stroke-width="0.5"/></g></svg>
<div class="r" style="left:197.00px;top:52.00px;width:22.70px;height:15.70px;background:#c5dcf3;"></div>
<svg class="r" style="left:203.00px;top:55.40px;" width="11" height="10" viewBox="0 0 11 10"><rect x="1.2" y="1.2" width="8.4" height="7" fill="none" stroke="#3f4a55" stroke-width="0.6"/></svg>
<svg class="r" style="left:226.00px;top:55.00px;" width="10" height="10" viewBox="0 0 10 10"><circle cx="5" cy="5" r="3.8" fill="none" stroke="#444" stroke-width="0.55"/></svg>
<svg class="r" style="left:294.00px;top:50.00px;" width="15" height="21" viewBox="0 0 15 21"><rect x="1.8" y="7.2" width="10" height="11.2" fill="#f4f4f4" stroke="#555" stroke-width="0.7"/><rect x="4" y="9.6" width="5.6" height="6.4" fill="#fff" stroke="#555" stroke-width="0.7"/><path d="M3 2.2V5.2M10.6 2.2V5.2M3 3.6H10.6M4.2 2.8L3.2 3.6L4.2 4.4M9.4 2.8L10.4 3.6L9.4 4.4" fill="none" stroke="#444" stroke-width="0.5"/><path d="M13.8 11V17.4M12.8 12L13.8 10.8L14.8 12M12.8 16.4L13.8 17.6L14.8 16.4" fill="none" stroke="#444" stroke-width="0.5"/></svg>
<div class="r" style="left:316.40px;top:50.60px;width:57.20px;height:9.00px;background:#fff;border:0.5px solid #a6a6a6"></div>
<span class="t" style="left:318.40px;top:52.00px;font-size:5.26px;line-height:6px;color:#333;letter-spacing:-0.018px;transform:scaleX(1.0638);">1000</span>
<div class="r" style="left:316.40px;top:61.20px;width:57.20px;height:9.00px;background:#fff;border:0.5px solid #a6a6a6"></div>
<span class="t" style="left:318.40px;top:62.00px;font-size:5.26px;line-height:6px;color:#333;letter-spacing:-0.018px;transform:scaleX(1.0638);">1000</span>
<div class="r" style="left:375.50px;top:50.20px;width:9.90px;height:20.00px;background:#c5dcf3;border:0.5px solid #7fa9e6"></div>
<svg class="r" style="left:376.00px;top:50.60px;" width="9.3" height="19.6" viewBox="0 0 9.3 19.6"><path d="M2 2.2H6V17.4H2" fill="none" stroke="#555" stroke-width="0.55"/><rect x="5" y="5.6" width="2" height="3.4" rx="0.9" fill="#e9eef5" stroke="#555" stroke-width="0.45"/><rect x="5" y="10.6" width="2" height="3.4" rx="0.9" fill="#e9eef5" stroke="#555" stroke-width="0.45"/><path d="M6 8.4V11.2" stroke="#555" stroke-width="0.45"/></svg>
<svg class="r" style="left:392.00px;top:51.00px;" width="18" height="19" viewBox="0 0 18 19"><rect x="1.4" y="2.6" width="10.4" height="13" fill="#f3f3f3" stroke="#555" stroke-width="0.7"/><path d="M4 4.2V10.8H9.2V4.2" fill="#fff" stroke="#555" stroke-width="0.6"/><path d="M1.4 13H11.8" stroke="#777" stroke-width="0.4"/><path d="M12 3.4H15" stroke="#555" stroke-width="0.4" stroke-dasharray="0.7 0.5"/><path d="M14.6 2.4L16.2 3.4L14.6 4.4Z" fill="#333"/><path d="M12 15.6H14.4" stroke="#555" stroke-width="0.4" stroke-dasharray="0.7 0.5"/><path d="M14.2 14.8H16.6L15.4 16.4Z" fill="#333"/></svg>
<div class="r" style="left:412.60px;top:61.20px;width:68.40px;height:9.00px;background:#ebebeb;border:0.5px solid #d6d6d6"></div>
<span class="t" style="left:415.20px;top:62.00px;font-size:5.36px;line-height:6px;color:#666;letter-spacing:0.013px;transform:scaleX(1.0638);">by Elevation</span>
<div class="r" style="left:564.10px;top:50.20px;width:7.40px;height:6.60px;background:#c5dcf3;"></div>
<svg class="r" style="left:559.80px;top:52.60px;" width="3" height="3" viewBox="0 0 3 3"><path d="M1.5 0.2V2.8M0.2 1.5H2.8" stroke="#333" stroke-width="0.5"/><circle cx="1.5" cy="1.5" r="0.6" fill="#222"/></svg>
<svg class="r" style="left:559.80px;top:59.20px;" width="3" height="3" viewBox="0 0 3 3"><path d="M1.5 0.2V2.8M0.2 1.5H2.8" stroke="#333" stroke-width="0.5"/><circle cx="1.5" cy="1.5" r="0.6" fill="#222"/></svg>
<svg class="r" style="left:559.80px;top:65.80px;" width="3" height="3" viewBox="0 0 3 3"><path d="M1.5 0.2V2.8M0.2 1.5H2.8" stroke="#333" stroke-width="0.5"/><circle cx="1.5" cy="1.5" r="0.6" fill="#222"/></svg>
<svg class="r" style="left:566.40px;top:52.60px;" width="3" height="3" viewBox="0 0 3 3"><path d="M1.5 0.2V2.8M0.2 1.5H2.8" stroke="#333" stroke-width="0.5"/><circle cx="1.5" cy="1.5" r="0.6" fill="#222"/></svg>
<svg class="r" style="left:566.40px;top:59.20px;" width="3" height="3" viewBox="0 0 3 3"><circle cx="1.5" cy="1.5" r="0.6" fill="#222"/></svg>
<svg class="r" style="left:566.40px;top:65.80px;" width="3" height="3" viewBox="0 0 3 3"><path d="M1.5 0.2V2.8M0.2 1.5H2.8" stroke="#333" stroke-width="0.5"/><circle cx="1.5" cy="1.5" r="0.6" fill="#222"/></svg>
<svg class="r" style="left:573.20px;top:52.60px;" width="3" height="3" viewBox="0 0 3 3"><path d="M1.5 0.2V2.8M0.2 1.5H2.8" stroke="#333" stroke-width="0.5"/><circle cx="1.5" cy="1.5" r="0.6" fill="#222"/></svg>
<svg class="r" style="left:573.20px;top:59.20px;" width="3" height="3" viewBox="0 0 3 3"><path d="M1.5 0.2V2.8M0.2 1.5H2.8" stroke="#333" stroke-width="0.5"/><circle cx="1.5" cy="1.5" r="0.6" fill="#222"/></svg>
<svg class="r" style="left:573.20px;top:65.80px;" width="3" height="3" viewBox="0 0 3 3"><path d="M1.5 0.2V2.8M0.2 1.5H2.8" stroke="#333" stroke-width="0.5"/><circle cx="1.5" cy="1.5" r="0.6" fill="#222"/></svg>
<div class="r" style="left:583.00px;top:53.00px;width:90.40px;height:14.60px;background:#e1e1e1;border:0.5px solid #c9c9c9;border-radius:0.6px"></div>
<svg class="r" style="left:585.50px;top:56.00px;" width="10" height="9" viewBox="0 0 10 9"><rect x="0.8" y="1" width="8.2" height="6.6" fill="#6a6a6a" stroke="#333" stroke-width="0.5"/><rect x="2.8" y="2.6" width="4.2" height="3.4" fill="#f4f4f4" stroke="#333" stroke-width="0.4"/></svg>
<span class="t" style="left:597.20px;top:57.00px;font-size:5.55px;line-height:6px;color:#4c4c4c;letter-spacing:0.023px;transform:scaleX(1.0638);">Floor Plan and Section...</span>
<svg class="r" style="left:668.77px;top:57.83px;" width="2.465" height="4.93" viewBox="0 0 2.465 4.93"><path d="M0 0V4.93L2.465 2.465Z" fill="#333"/></svg>
<div class="r" style="left:678.00px;top:52.00px;width:23.60px;height:15.80px;background:#c5dcf3;"></div>
<svg class="r" style="left:684.00px;top:55.00px;" width="12" height="11" viewBox="0 0 12 11"><path d="M1.6 4.2C1.2 2.8 2.8 2.2 3.8 2.8C4.6 1.8 7.4 1.8 8.2 2.8C9.2 2.2 10.8 2.8 10.4 4.2C11 5 11 5.6 10.4 6.4C10.8 7.8 9.2 8.4 8.2 7.8C7.4 8.8 4.6 8.8 3.8 7.8C2.8 8.4 1.2 7.8 1.6 6.4C1 5.6 1 5 1.6 4.2Z" fill="#eef3fa" stroke="#3f4a55" stroke-width="0.6"/><path d="M3.2 1.2H8.8M3.2 9.5H8.8" stroke="#3f4a55" stroke-width="0.75" stroke-dasharray="0.7 0.7"/></svg>
<svg class="r" style="left:707.50px;top:55.00px;" width="12" height="11" viewBox="0 0 12 11"><path d="M2.6 0.8V10.2" stroke="#555" stroke-width="0.6"/><path d="M3.9 1.2H6.4M3.9 9.8H6.4" stroke="#555" stroke-width="0.7" stroke-dasharray="0.6 0.6"/><path d="M4 2.6C5.6 1.8 8 2.2 8 3.6C9.8 3.6 9.8 7.2 8 7.4C8 8.8 5.6 9.2 4 8.4Z" fill="#f4f4f4" stroke="#555" stroke-width="0.55"/></svg>
<svg class="r" style="left:731.00px;top:55.00px;" width="12" height="11" viewBox="0 0 12 11"><path d="M3.4 0.8V10.2" stroke="#555" stroke-width="0.55"/><path d="M4.4 1.2H6.8M4.4 9.8H6.8M1.8 2V9" stroke="#555" stroke-width="0.6" stroke-dasharray="0.6 0.6"/><path d="M4.6 2.6C6 1.8 8.2 2.2 8.2 3.6C9.8 3.6 9.8 7.2 8.2 7.4C8.2 8.8 6 9.2 4.6 8.4Z" fill="#f4f4f4" stroke="#555" stroke-width="0.55"/></svg>
<div class="r" style="left:748.60px;top:53.00px;width:21.00px;height:14.60px;background:#d0d0d0;"></div>
<svg class="r" style="left:752.50px;top:54.50px;" width="13" height="12" viewBox="0 0 13 12"><path d="M2.6 10.8V6C1.2 5.4 2 3 3.8 3.6C4.4 1.4 8.6 1.4 9 3.6C11 3.2 11.6 5.4 10.4 6.2V10.8Z" fill="#d8d8d8" stroke="#b6b6b6" stroke-width="0.6"/><path d="M6.4 9.6V5.2M5.2 6.4L6.4 5L7.6 6.4" fill="none" stroke="#b6b6b6" stroke-width="0.55"/></svg>
<svg class="r" style="left:778.00px;top:50.50px;" width="17" height="20" viewBox="0 0 17 20"><path d="M1.4 1.4V6.6M1.4 4H7" stroke="#8a8a8a" stroke-width="0.5"/><rect x="7" y="2.2" width="6.6" height="3.6" rx="1.6" fill="#f6f6f6" stroke="#a6a6a6" stroke-width="0.5"/><path d="M1.4 12.2V17.4M1.4 14.8H7" stroke="#8a8a8a" stroke-width="0.5"/><path d="M7 12.6H13.6V16.6H7" fill="#f6f6f6" stroke="#a6a6a6" stroke-width="0.5"/><path d="M7.4 18.4H13.4M7.4 17.6V19.2M13.4 17.6V19.2" stroke="#8a8a8a" stroke-width="0.4"/></svg>
<div class="r" style="left:797.60px;top:50.60px;width:68.80px;height:9.00px;background:#f2f2f2;border:0.5px solid #d9d9d9"></div>
<span class="t" style="left:800.20px;top:52.00px;font-size:5.26px;line-height:6px;color:#777;letter-spacing:0.030px;transform:scaleX(1.0638);">N/A</span>
<div class="r" style="left:797.60px;top:61.40px;width:68.80px;height:8.80px;background:#f2f2f2;border:0.5px solid #d9d9d9"></div>
<span class="t" style="left:800.20px;top:63.00px;font-size:5.26px;line-height:6px;color:#777;letter-spacing:0.030px;transform:scaleX(1.0638);">N/A</span>
<svg class="r" style="left:871.50px;top:55.50px;" width="10" height="10" viewBox="0 0 10 10"><circle cx="3.4" cy="3.8" r="2.2" fill="none" stroke="#555" stroke-width="0.55"/><circle cx="5.6" cy="5.6" r="2.6" fill="none" stroke="#555" stroke-width="0.55"/><path d="M1.6 1.8L8.2 8.6" stroke="#555" stroke-width="0.55"/></svg>
<span class="t" style="left:883.20px;top:57.00px;font-size:5.55px;line-height:6px;color:#4c4c4c;letter-spacing:0.042px;transform:scaleX(1.0638);">Empty Opening</span>
<div class="r" style="left:942.00px;top:53.00px;width:20.00px;height:14.60px;background:#e3e3e3;border:0.5px solid #c9c9c9;border-radius:0.6px"></div>
<svg class="r" style="left:944.00px;top:54.80px;" width="12" height="11" viewBox="0 0 12 11"><path d="M3 7.4C1 7.4 1 4.6 2.8 4.6C2.8 1.8 7 1.4 7.4 4C9.6 3.8 9.8 7.4 7.8 7.4Z" fill="#f6f6f6" stroke="#555" stroke-width="0.6"/><path d="M5.4 5V9.6M4 6.6L5.4 5L6.8 6.6M3.6 9.8H7.2" fill="none" stroke="#555" stroke-width="0.55"/></svg>
<svg class="r" style="left:957.51px;top:58.12px;" width="2.175" height="4.35" viewBox="0 0 2.175 4.35"><path d="M0 0V4.35L2.175 2.175Z" fill="#333"/></svg>
<div class="r" style="left:967.40px;top:55.40px;width:35.60px;height:10.40px;background:#fff;border:0.5px solid #b0b0b0"></div>
<span class="t" style="left:970.00px;top:58.00px;font-size:4.61px;line-height:5px;color:#333;letter-spacing:0.065px;transform:scaleX(1.0638);">OP - 014</span>
<div class="r" style="left:350.40px;top:72.00px;width:155.40px;height:11.60px;background:#ffffff;"></div>
<svg class="r" style="left:26.00px;top:73.50px;" width="11" height="9" viewBox="0 0 11 9"><rect x="0.6" y="0.6" width="3.8" height="3.2" fill="none" stroke="#777" stroke-width="0.6"/><rect x="5.6" y="0.6" width="3.8" height="3.2" fill="none" stroke="#777" stroke-width="0.6"/><rect x="0.6" y="5" width="3.8" height="3.2" fill="none" stroke="#777" stroke-width="0.6"/><rect x="5.6" y="5" width="3.8" height="3.2" fill="none" stroke="#777" stroke-width="0.6"/></svg>
<div class="r" style="left:37.60px;top:73.00px;width:0.50px;height:10.00px;background:#c2c2c2;"></div>
<svg class="r" style="left:39.50px;top:73.50px;" width="11" height="9" viewBox="0 0 11 9"><path d="M0.8 7.6V1H3.6V3.4H9.4V7.6Z" fill="#fff" stroke="#555" stroke-width="0.6"/></svg>
<span class="t" style="left:50.80px;top:75.00px;font-size:5.59px;line-height:6px;color:#4a4a4a;letter-spacing:0.013px;transform:scaleX(1.0638);">[0. Ground Floor]</span>
<svg class="r" style="left:195.50px;top:72.80px;" width="10" height="10.5" viewBox="0 0 10 10.5"><path d="M2.6 9.6V4.8L3.4 3.2V1.8H6.2V3.2L7 4.8V9.6Z" fill="#f0f0f0" stroke="#555" stroke-width="0.55"/><path d="M1.6 9.6H8M3.8 9.6V6.4H5.8V9.6M2.6 4.8H7" fill="none" stroke="#555" stroke-width="0.5"/><circle cx="7.6" cy="1.6" r="1.1" fill="#f08030"/></svg>
<span class="t" style="left:206.80px;top:75.00px;font-size:5.59px;line-height:6px;color:#4a4a4a;letter-spacing:-0.010px;transform:scaleX(1.0638);">[Action Center]</span>
<svg class="r" style="left:352.50px;top:73.20px;" width="8" height="10" viewBox="0 0 8 10"><path d="M1 1.6H5.8C7 1.6 7.2 2.6 7.2 3V7.6C7 8.6 6 9 5.4 9H1Z" fill="#fff" stroke="#555" stroke-width="0.6"/><path d="M5.4 1.8V9" stroke="#555" stroke-width="0.5"/></svg>
<span class="t" style="left:362.80px;top:75.00px;font-size:5.59px;line-height:6px;color:#4a4a4a;letter-spacing:0.005px;transform:scaleX(1.0638);">[3D / All]</span>
<svg class="r" style="left:498.00px;top:76.00px;" width="4" height="4" viewBox="0 0 4 4"><path d="M0.6 0.6L3.4 3.4M3.4 0.6L0.6 3.4" stroke="#333" stroke-width="0.6"/></svg>
<svg class="r" style="left:508.50px;top:73.50px;" width="10" height="9" viewBox="0 0 10 9"><path d="M0.9 7.9V3.5L4.7 1.5L8.5 3.5V7.9Z" fill="#fff" stroke="#555" stroke-width="0.55"/></svg>
<span class="t" style="left:518.80px;top:75.00px;font-size:5.59px;line-height:6px;color:#4a4a4a;letter-spacing:0.013px;transform:scaleX(1.0638);">[South Elevation]</span>
<svg class="r" style="left:881.00px;top:73.00px;" width="18" height="10" viewBox="0 0 18 10"><path d="M5.6 8.2V4.2L9.6 1.6L13.8 4.2V8.2Z" fill="#f4f8fe" stroke="#3d7be6" stroke-width="0.7"/><path d="M2.2 2V8.4M1 7L2.2 8.6L3.4 7M1 3.4L2.2 1.8L3.4 3.4M2.2 8.2H5.6" fill="none" stroke="#3d7be6" stroke-width="0.5"/></svg>
<svg class="r" style="left:900.10px;top:76.45px;" width="3.0" height="1.5" viewBox="0 0 3.0 1.5"><path d="M0 0H3.0L1.5 1.5Z" fill="#333"/></svg>
<div class="r" style="left:662.20px;top:73.00px;width:0.50px;height:10.00px;background:#c8c8c8;"></div>
<div class="r" style="left:7.60px;top:74.20px;width:9.00px;height:0.50px;background:#9a9a9a;"></div>
<svg class="r" style="left:5.20px;top:77.60px;" width="14" height="14" viewBox="0 0 14 14"><path d="M5 2.2V11.2L7.2 9.2L8.6 12.2L9.8 11.6L8.4 8.8L11 8.6Z" fill="#666" stroke="#444" stroke-width="0.4"/></svg>
<svg class="r" style="left:5.20px;top:93.20px;" width="14" height="14" viewBox="0 0 14 14"><rect x="2" y="3.4" width="10" height="7.4" fill="none" stroke="#444" stroke-width="0.7" stroke-dasharray="1.6 0.9"/></svg>
<div class="r" style="left:0.00px;top:110.40px;width:24.00px;height:9.60px;background:#dcdcdc;border-radius:2px"></div>
<span class="t" style="left:1.60px;top:112.00px;font-size:5.55px;line-height:6px;color:#444;letter-spacing:0.007px;transform:scaleX(1.0638);">Design</span>
<svg class="r" style="left:5.20px;top:121.60px;" width="14" height="14" viewBox="0 0 14 14"><path d="M2 4L12.2 2.4V9.6L2.6 11.8Z" fill="#fafafa" stroke="#585858" stroke-width="0.5" stroke-linejoin="round"/></svg>
<svg class="r" style="left:5.20px;top:138.00px;" width="14" height="14" viewBox="0 0 14 14"><path d="M4.6 2.8L9.6 1.6V11L4.6 12.4Z" fill="#fafafa" stroke="#585858" stroke-width="0.5" stroke-linejoin="round"/><path d="M8.2 6.8V7.8" fill="none" stroke="#585858" stroke-width="0.5" stroke-linejoin="round"/></svg>
<svg class="r" style="left:5.20px;top:153.40px;" width="14" height="14" viewBox="0 0 14 14"><path d="M2.2 3.4L11.8 2.4V11.4L2.2 11.8Z" fill="#fafafa" stroke="#585858" stroke-width="0.5" stroke-linejoin="round"/><path d="M7.4 2.8V11.6M2.2 7.4L11.8 6.8" fill="none" stroke="#585858" stroke-width="0.5" stroke-linejoin="round"/></svg>
<div class="r" style="left:0.00px;top:168.40px;width:24.00px;height:14.80px;background:#c5dcf3;"></div>
<svg class="r" style="left:5.20px;top:168.80px;" width="14" height="14" viewBox="0 0 14 14"><path d="M2.4 4L7.8 3.2V10.4L2.4 11.6Z" fill="#fafafa" stroke="#585858" stroke-width="0.5" stroke-linejoin="round"/><path d="M7.8 3.2H11.8V10.4H7.8M2.4 11.6C5 12.6 9 12 11.8 10.4" fill="none" stroke="#585858" stroke-width="0.5" stroke-linejoin="round"/></svg>
<svg class="r" style="left:5.20px;top:184.40px;" width="14" height="14" viewBox="0 0 14 14"><path d="M5.6 2.4H8.6V11.2C8 12.2 6.2 12.2 5.6 11.2Z" fill="#fafafa" stroke="#585858" stroke-width="0.5" stroke-linejoin="round"/><ellipse cx="7.1" cy="2.4" rx="1.5" ry="0.6" fill="#fafafa" stroke="#585858" stroke-width="0.5" stroke-linejoin="round"/></svg>
<svg class="r" style="left:5.20px;top:199.60px;" width="14" height="14" viewBox="0 0 14 14"><path d="M1.6 3.4L3 2.4L12.2 7.4V9.6L10.6 10.4L1.6 5.4Z" fill="#fafafa" stroke="#585858" stroke-width="0.5" stroke-linejoin="round"/><path d="M1.6 3.4L10.6 8.2V10.4M10.6 8.2L12.2 7.4" fill="none" stroke="#585858" stroke-width="0.5" stroke-linejoin="round"/></svg>
<svg class="r" style="left:5.20px;top:214.80px;" width="14" height="14" viewBox="0 0 14 14"><path d="M1.4 7.2L4.2 4.4L5.4 5.4L7.6 3.4L12.6 6L7 10.6Z" fill="#fafafa" stroke="#585858" stroke-width="0.5" stroke-linejoin="round"/><path d="M1.4 7.2V8L7 11.4V10.6M7 11.4L12.6 6.8V6" fill="none" stroke="#585858" stroke-width="0.5" stroke-linejoin="round"/></svg>
<svg class="r" style="left:5.20px;top:230.80px;" width="14" height="14" viewBox="0 0 14 14"><path d="M2.2 3.4L7 2.2L9 3.6L4.4 5ZM3.4 5.6L8.4 4.2L10.4 5.8L5.6 7.4ZM4.6 8L9.8 6.4L11.8 8.2L6.8 10ZM6 10.6L11 8.8L12.4 10.2L7.6 12.2Z" fill="#fafafa" stroke="#585858" stroke-width="0.5" stroke-linejoin="round"/></svg>
<svg class="r" style="left:5.20px;top:246.20px;" width="14" height="14" viewBox="0 0 14 14"><path d="M1.8 8L12 4.4M1.8 6.2L12 2.6M1.8 6.2V11.4M5.2 5V10.4M8.6 3.8V9.2M12 2.6V8" fill="none" stroke="#585858" stroke-width="0.5" stroke-linejoin="round"/></svg>
<svg class="r" style="left:5.20px;top:262.00px;" width="14" height="14" viewBox="0 0 14 14"><path d="M1.6 8.6L5.4 3.2H9.4L12.6 8.2L9.6 6.4L6.4 11.2Z" fill="#fafafa" stroke="#585858" stroke-width="0.5" stroke-linejoin="round"/><path d="M9.4 3.2L9.6 6.4" fill="none" stroke="#585858" stroke-width="0.5" stroke-linejoin="round"/></svg>
<svg class="r" style="left:5.20px;top:278.00px;" width="14" height="14" viewBox="0 0 14 14"><path d="M1.4 4.4L6.6 8L12 2.6L11.2 8.4L6.4 12L2.2 9.2Z" fill="#fafafa" stroke="#585858" stroke-width="0.5" stroke-linejoin="round"/><path d="M6.6 8L6.4 12" fill="none" stroke="#585858" stroke-width="0.5" stroke-linejoin="round"/></svg>
<svg class="r" style="left:5.20px;top:293.40px;" width="14" height="14" viewBox="0 0 14 14"><path d="M2 3.6L8 2.2L12.2 5.8L6 7.8ZM2.6 6.6L6.2 10L12.2 8" fill="#fafafa" stroke="#585858" stroke-width="0.5" stroke-linejoin="round"/><path d="M2.6 6.6L2 3.6M6 7.8L6.2 10M12.2 5.8V8" fill="none" stroke="#585858" stroke-width="0.5" stroke-linejoin="round"/></svg>
<svg class="r" style="left:5.20px;top:309.20px;" width="14" height="14" viewBox="0 0 14 14"><path d="M2.4 3.6C6 3 9 2.4 12 2.4V10.4C9 10.4 5.6 11 2.4 11.8Z" fill="#fafafa" stroke="#585858" stroke-width="0.5" stroke-linejoin="round"/><path d="M5.6 3.1V11.2M8.8 2.6V10.6M2.4 6.2C6 5.6 9 5.2 12 5.2M2.4 9C6 8.4 9 8 12 7.8" fill="none" stroke="#585858" stroke-width="0.5" stroke-linejoin="round"/></svg>
<svg class="r" style="left:5.20px;top:324.60px;" width="14" height="14" viewBox="0 0 14 14"><path d="M3.2 8C3.2 4.6 5.2 2.2 7.8 2.2L11.6 7.6C10.4 9.8 8.6 10 7.4 9.6C6.4 11.8 3.2 11.4 3.2 8Z" fill="#fafafa" stroke="#585858" stroke-width="0.5" stroke-linejoin="round"/><path d="M7.8 2.2C7 4.6 7 7.4 7.4 9.6" fill="none" stroke="#585858" stroke-width="0.5" stroke-linejoin="round"/></svg>
<svg class="r" style="left:5.20px;top:340.20px;" width="14" height="14" viewBox="0 0 14 14"><path d="M4.4 11.6V6.8C4.4 3.6 4.8 2.2 6.4 2.2C8 2.2 8.2 3.8 8.2 6H10.6V11.6M4.4 8.2H8.4V11.6M8.2 6V8.2" fill="none" stroke="#585858" stroke-width="0.5" stroke-linejoin="round"/></svg>
<svg class="r" style="left:5.20px;top:356.00px;" width="14" height="14" viewBox="0 0 14 14"><path d="M2.4 2.6H5.2V5.2H8.6V2.6H11.6V7.6H10.4V11.4H2.4Z" fill="#fafafa" stroke="#585858" stroke-width="0.5" stroke-linejoin="round"/><path d="M3.6 10.2H9.2V7.2" fill="none" stroke="#585858" stroke-width="0.4"/></svg>
<svg class="r" style="left:5.20px;top:371.60px;" width="14" height="14" viewBox="0 0 14 14"><path d="M1.4 5.4L7 2.6L12.6 8.4L8.2 11.8Z" fill="#fafafa" stroke="#585858" stroke-width="0.5" stroke-linejoin="round"/><path d="M3.6 4.4C5.6 6.4 8 8.2 10.4 10M5.4 3.6C7.4 5.6 9.6 7.4 11.6 9.2M3.4 7.4L9 5M5.6 9.4L10.8 6.8" fill="none" stroke="#585858" stroke-width="0.5" stroke-linejoin="round"/></svg>
<div class="r" style="left:0.00px;top:389.00px;width:24.00px;height:9.80px;background:#dcdcdc;border-radius:2px"></div>
<span class="t" style="left:1.60px;top:391.00px;font-size:5.36px;line-height:6px;color:#444;letter-spacing:-0.042px;transform:scaleX(1.0638);">Docume</span>
<svg class="r" style="left:5.20px;top:401.00px;" width="14" height="14" viewBox="0 0 14 14"><path d="M2 8.2H12.2M2.6 6.4V10M11.6 6.4V10M3.4 7.4L2.2 8.2L3.4 9M10.8 7.4L12 8.2L10.8 9" fill="none" stroke="#585858" stroke-width="0.5" stroke-linejoin="round"/><path d="M5.8 3.2V5.4M7.4 5.2h0.1M8.2 3.6C9 2.8 9.8 3.6 9.2 4.4L8.2 5.4H9.6" fill="none" stroke="#585858" stroke-width="0.45"/></svg>
<svg class="r" style="left:5.20px;top:416.20px;" width="14" height="14" viewBox="0 0 14 14"><circle cx="6.4" cy="7.6" r="3.2" fill="none" stroke="#585858" stroke-width="0.5" stroke-linejoin="round"/><path d="M6.4 3.2V12M2 7.6H10.8" fill="none" stroke="#585858" stroke-width="0.5" stroke-linejoin="round"/><path d="M10.6 3V5M11.6 4.8h0.1M12.4 3.4C13 2.8 13.6 3.4 13.2 4L12.4 5H13.6" fill="none" stroke="#585858" stroke-width="0.4"/></svg>
<svg class="r" style="left:5.20px;top:432.40px;" width="14" height="14" viewBox="0 0 14 14"><path d="M3 11.6L7 2.6L11 11.6M4.4 8.4H9.6" fill="none" stroke="#585858" stroke-width="0.5" stroke-linejoin="round"/></svg>
<svg class="r" style="left:5.20px;top:448.00px;" width="14" height="14" viewBox="0 0 14 14"><path d="M1.4 10.6L6 6M1.4 10.6V7.6M1.4 10.6H4.4" fill="none" stroke="#585858" stroke-width="0.5" stroke-linejoin="round"/><path d="M6.4 9L8.6 3.6L10.8 9M7.2 7.2H10M11.6 4.8L12.8 3.6V9" fill="none" stroke="#585858" stroke-width="0.55"/></svg>
<svg class="r" style="left:5.20px;top:463.60px;" width="14" height="14" viewBox="0 0 14 14"><path d="M2 10.8C2 7 4 3.6 8.4 3.2H11L8.4 7L12 10.8Z" fill="#8a8a8a" stroke="#585858" stroke-width="0.5"/><path d="M3 9.8L8.6 4.2M4 10.6L9 5.6M6 10.6L9.2 7.4M2.4 8L6.6 3.8" stroke="#ddd" stroke-width="0.35"/></svg>
<svg class="r" style="left:5.20px;top:479.00px;" width="14" height="14" viewBox="0 0 14 14"><path d="M2.4 11.6L11.8 2.4" fill="none" stroke="#585858" stroke-width="0.5" stroke-linejoin="round"/></svg>
<svg class="r" style="left:5.20px;top:494.60px;" width="14" height="14" viewBox="0 0 14 14"><circle cx="7" cy="7" r="4.4" fill="none" stroke="#585858" stroke-width="0.5" stroke-linejoin="round"/></svg>
<svg class="r" style="left:5.20px;top:509.00px;" width="14" height="14" viewBox="0 0 14 14"><path d="M3 12L6 5.4H12.4" fill="none" stroke="#585858" stroke-width="0.5" stroke-linejoin="round"/></svg>
<div class="r" style="left:0.00px;top:518.80px;width:24.00px;height:10.20px;background:#f0f0f0;"></div>
<div class="r" style="left:0.00px;top:518.80px;width:23.60px;height:9.80px;background:#dcdcdc;border-radius:1.5px"></div>
<span class="t" style="left:1.80px;top:521.00px;font-size:5.45px;line-height:6px;color:#444;letter-spacing:-0.004px;transform:scaleX(1.0638);">More</span>
<div class="r" style="left:905.20px;top:72.00px;width:0.50px;height:457.30px;background:#ececec;"></div>
<div class="r" style="left:905.90px;top:93.80px;width:93.10px;height:345.80px;background:#ffffff;"></div>
<div class="r" style="left:935.00px;top:73.80px;width:35.00px;height:0.50px;background:#9a9a9a;"></div>
<div class="r" style="left:906.20px;top:78.40px;width:21.80px;height:14.20px;background:#e1e1e1;border:0.5px solid #c2c2c2;border-radius:0.6px"></div>
<svg class="r" style="left:910.50px;top:80.00px;" width="11" height="11" viewBox="0 0 11 11"><path d="M2.4 1.8H5.6V4.6H2.4ZM3.6 4.6V9.4H6.2M3.6 7H6.2" fill="none" stroke="#444" stroke-width="0.6"/><path d="M6.2 6.2H8.6V7.8H6.2ZM6.2 8.6H8.6V10.2H6.2Z" fill="#444"/></svg>
<svg class="r" style="left:923.93px;top:83.46px;" width="1.74" height="3.48" viewBox="0 0 1.74 3.48"><path d="M0 0V3.48L1.74 1.74Z" fill="#333"/></svg>
<svg class="r" style="left:938.50px;top:80.00px;" width="12" height="12" viewBox="0 0 12 12"><path d="M1.6 10V5.4L5 2L8.4 5.4V10Z" fill="#fafafa" stroke="#555" stroke-width="0.6"/><path d="M5 2.4V10" stroke="#777" stroke-width="0.4"/><path d="M8.4 5.4L10.4 6.6V10H8.4" fill="#fafafa" stroke="#555" stroke-width="0.6"/></svg>
<div class="r" style="left:952.20px;top:78.20px;width:15.80px;height:14.80px;background:#c5dcf3;"></div>
<svg class="r" style="left:954.00px;top:80.00px;" width="12" height="12" viewBox="0 0 12 12"><path d="M1.8 9.8V2.4H5.4V5H10.4V9.8Z" fill="#dfe9f5" stroke="#2f6a68" stroke-width="0.7"/></svg>
<svg class="r" style="left:970.50px;top:80.00px;" width="12" height="12" viewBox="0 0 12 12"><path d="M2.4 10.4V3L4.2 1.8V9.2L10.4 9.2V10.4Z M4.2 3.4H10.4V9.2" fill="#fafafa" stroke="#555" stroke-width="0.6"/><path d="M7.6 8.2H9.4V9.2" fill="none" stroke="#555" stroke-width="0.4"/></svg>
<svg class="r" style="left:986.00px;top:80.00px;" width="12" height="12" viewBox="0 0 12 12"><rect x="3.2" y="3.4" width="7" height="7" rx="1" fill="#cfcfcf" stroke="#666" stroke-width="0.6"/><rect x="1.6" y="1.8" width="7" height="7" rx="1.2" fill="#f4f4f4" stroke="#555" stroke-width="0.6"/></svg>
<svg class="r" style="left:909.20px;top:98.60px;" width="5" height="3.4" viewBox="0 0 5 3.4"><path d="M0.5 0.6L2.5 2.8L4.5 0.6" fill="none" stroke="#3a3a3a" stroke-width="0.75"/></svg>
<svg class="r" style="left:916.60px;top:95.60px;" width="11" height="9.4" viewBox="0 0 11 9.4"><path d="M0.8 5.6V2.8L3 0.9L5.4 2.8V5.6Z" fill="#fff" stroke="#4a85ea" stroke-width="0.6"/><path d="M5.4 2.8L7.6 1.6V4" fill="none" stroke="#4a85ea" stroke-width="0.5"/><path d="M6.2 8.6V3.8H8L9.4 5.2V8.6Z" fill="#fff" stroke="#4a85ea" stroke-width="0.6"/></svg>
<span class="t" style="left:928.30px;top:97.00px;font-size:5.50px;line-height:6px;color:#3c3c3c;letter-spacing:0.251px;transform:scaleX(1.0638);">Untitled</span>
<svg class="r" style="left:920.60px;top:107.46px;" width="11" height="8.6" viewBox="0 0 11 8.6"><path d="M0.8 7.6V0.9H3.8V3H9.6V7.6Z" fill="#fff" stroke="#4a85ea" stroke-width="0.6"/><path d="M1.6 1.6H3" stroke="#4a85ea" stroke-width="0.5"/></svg>
<span class="t" style="left:933.80px;top:108.00px;font-size:5.50px;line-height:6px;color:#3c3c3c;letter-spacing:-0.213px;transform:scaleX(1.0638);">Site</span>
<svg class="r" style="left:914.40px;top:121.52px;" width="5" height="3.4" viewBox="0 0 5 3.4"><path d="M0.5 0.6L2.5 2.8L4.5 0.6" fill="none" stroke="#3a3a3a" stroke-width="0.75"/></svg>
<svg class="r" style="left:920.60px;top:118.92px;" width="11" height="9.4" viewBox="0 0 11 9.4"><path d="M1.8 7.4V1H4.6V3H9.8V7.4Z" fill="#d6e4f8" stroke="#4a85ea" stroke-width="0.6"/><path d="M1.8 1H4.6V2.4H1.8Z" fill="#4a85ea"/><path d="M0.6 8.9L2.6 6.9M1 6.6H2.9V8.5" fill="none" stroke="#111" stroke-width="0.8"/></svg>
<span class="t" style="left:933.80px;top:120.00px;font-size:5.50px;line-height:6px;color:#3c3c3c;letter-spacing:-0.036px;transform:scaleX(1.0638);">Floor Plans</span>
<svg class="r" style="left:925.60px;top:130.38px;" width="11" height="8.6" viewBox="0 0 11 8.6"><path d="M0.8 7.6V0.9H3.8V3H9.6V7.6Z" fill="#fff" stroke="#4a85ea" stroke-width="0.6"/><path d="M1.6 1.6H3" stroke="#4a85ea" stroke-width="0.5"/></svg>
<span class="t" style="left:938.80px;top:131.00px;font-size:5.50px;line-height:6px;color:#3c3c3c;letter-spacing:-0.048px;transform:scaleX(1.0638);">2. Story</span>
<svg class="r" style="left:925.60px;top:141.84px;" width="11" height="8.6" viewBox="0 0 11 8.6"><path d="M0.8 7.6V0.9H3.8V3H9.6V7.6Z" fill="#fff" stroke="#4a85ea" stroke-width="0.6"/><path d="M1.6 1.6H3" stroke="#4a85ea" stroke-width="0.5"/></svg>
<span class="t" style="left:938.80px;top:143.00px;font-size:5.50px;line-height:6px;color:#3c3c3c;letter-spacing:-0.048px;transform:scaleX(1.0638);">1. Story</span>
<svg class="r" style="left:925.60px;top:153.30px;" width="11" height="8.6" viewBox="0 0 11 8.6"><path d="M0.8 7.6V0.9H3.8V3H9.6V7.6Z" fill="#fff" stroke="#4a85ea" stroke-width="0.6"/><path d="M1.6 1.6H3" stroke="#4a85ea" stroke-width="0.5"/></svg>
<span class="t" style="left:938.80px;top:154.00px;font-size:5.50px;line-height:6px;color:#3c3c3c;letter-spacing:0.110px;transform:scaleX(1.0638);">0. Ground Floor</span>
<svg class="r" style="left:914.40px;top:167.36px;" width="5" height="3.4" viewBox="0 0 5 3.4"><path d="M0.5 0.6L2.5 2.8L4.5 0.6" fill="none" stroke="#3a3a3a" stroke-width="0.75"/></svg>
<svg class="r" style="left:920.60px;top:164.76px;" width="11" height="9.4" viewBox="0 0 11 9.4"><path d="M1.8 7.4V1H4.6V3H9.8V7.4Z" fill="#d6e4f8" stroke="#4a85ea" stroke-width="0.6"/><path d="M1.8 1H4.6V2.4H1.8Z" fill="#4a85ea"/><path d="M0.6 8.9L2.6 6.9M1 6.6H2.9V8.5" fill="none" stroke="#111" stroke-width="0.8"/></svg>
<span class="t" style="left:933.80px;top:166.00px;font-size:5.50px;line-height:6px;color:#3c3c3c;letter-spacing:-0.035px;transform:scaleX(1.0638);">Ceiling Plans</span>
<svg class="r" style="left:925.60px;top:176.22px;" width="11" height="8.6" viewBox="0 0 11 8.6"><path d="M0.8 7.6V0.9H3.8V3H9.6V7.6Z" fill="#fff" stroke="#4a85ea" stroke-width="0.6"/><path d="M1.6 1.6H3" stroke="#4a85ea" stroke-width="0.5"/></svg>
<span class="t" style="left:938.80px;top:177.00px;font-size:5.50px;line-height:6px;color:#3c3c3c;letter-spacing:-0.048px;transform:scaleX(1.0638);">2. Story</span>
<svg class="r" style="left:925.60px;top:187.68px;" width="11" height="8.6" viewBox="0 0 11 8.6"><path d="M0.8 7.6V0.9H3.8V3H9.6V7.6Z" fill="#fff" stroke="#4a85ea" stroke-width="0.6"/><path d="M1.6 1.6H3" stroke="#4a85ea" stroke-width="0.5"/></svg>
<span class="t" style="left:938.80px;top:189.00px;font-size:5.50px;line-height:6px;color:#3c3c3c;letter-spacing:-0.048px;transform:scaleX(1.0638);">1. Story</span>
<svg class="r" style="left:925.60px;top:199.14px;" width="11" height="8.6" viewBox="0 0 11 8.6"><path d="M0.8 7.6V0.9H3.8V3H9.6V7.6Z" fill="#fff" stroke="#4a85ea" stroke-width="0.6"/><path d="M1.6 1.6H3" stroke="#4a85ea" stroke-width="0.5"/></svg>
<span class="t" style="left:938.80px;top:200.00px;font-size:5.50px;line-height:6px;color:#3c3c3c;letter-spacing:0.110px;transform:scaleX(1.0638);">0. Ground Floor</span>
<svg class="r" style="left:914.40px;top:213.20px;" width="5" height="3.4" viewBox="0 0 5 3.4"><path d="M0.5 0.6L2.5 2.8L4.5 0.6" fill="none" stroke="#3a3a3a" stroke-width="0.75"/></svg>
<svg class="r" style="left:920.60px;top:210.60px;" width="11" height="9.4" viewBox="0 0 11 9.4"><path d="M1.8 7.4V1H4.6V3H9.8V7.4Z" fill="#d6e4f8" stroke="#4a85ea" stroke-width="0.6"/><path d="M1.8 1H4.6V2.4H1.8Z" fill="#4a85ea"/><path d="M0.6 8.9L2.6 6.9M1 6.6H2.9V8.5" fill="none" stroke="#111" stroke-width="0.8"/></svg>
<span class="t" style="left:933.80px;top:212.00px;font-size:5.50px;line-height:6px;color:#3c3c3c;letter-spacing:-0.006px;transform:scaleX(1.0638);">Structural Plans</span>
<svg class="r" style="left:925.60px;top:222.06px;" width="11" height="8.6" viewBox="0 0 11 8.6"><path d="M0.8 7.6V0.9H3.8V3H9.6V7.6Z" fill="#fff" stroke="#4a85ea" stroke-width="0.6"/><path d="M1.6 1.6H3" stroke="#4a85ea" stroke-width="0.5"/></svg>
<span class="t" style="left:938.80px;top:223.00px;font-size:5.50px;line-height:6px;color:#3c3c3c;letter-spacing:-0.048px;transform:scaleX(1.0638);">2. Story</span>
<svg class="r" style="left:925.60px;top:233.52px;" width="11" height="8.6" viewBox="0 0 11 8.6"><path d="M0.8 7.6V0.9H3.8V3H9.6V7.6Z" fill="#fff" stroke="#4a85ea" stroke-width="0.6"/><path d="M1.6 1.6H3" stroke="#4a85ea" stroke-width="0.5"/></svg>
<span class="t" style="left:938.80px;top:234.00px;font-size:5.50px;line-height:6px;color:#3c3c3c;letter-spacing:-0.048px;transform:scaleX(1.0638);">1. Story</span>
<svg class="r" style="left:925.60px;top:244.98px;" width="11" height="8.6" viewBox="0 0 11 8.6"><path d="M0.8 7.6V0.9H3.8V3H9.6V7.6Z" fill="#fff" stroke="#4a85ea" stroke-width="0.6"/><path d="M1.6 1.6H3" stroke="#4a85ea" stroke-width="0.5"/></svg>
<span class="t" style="left:938.80px;top:246.00px;font-size:5.50px;line-height:6px;color:#3c3c3c;letter-spacing:0.110px;transform:scaleX(1.0638);">0. Ground Floor</span>
<svg class="r" style="left:920.60px;top:256.44px;" width="11" height="9.4" viewBox="0 0 11 9.4"><path d="M1.8 7.4V3.4L5.8 1.2L9.8 3.4V7.4Z" fill="#d6e4f8" stroke="#4a85ea" stroke-width="0.6"/><path d="M1.8 3.4H9.8" stroke="#4a85ea" stroke-width="0.5"/><path d="M0.6 8.9L2.6 6.9M1 6.6H2.9V8.5" fill="none" stroke="#111" stroke-width="0.8"/></svg>
<span class="t" style="left:933.80px;top:257.00px;font-size:5.50px;line-height:6px;color:#3c3c3c;letter-spacing:-0.099px;transform:scaleX(1.0638);">Sections</span>
<svg class="r" style="left:914.40px;top:270.50px;" width="5" height="3.4" viewBox="0 0 5 3.4"><path d="M0.5 0.6L2.5 2.8L4.5 0.6" fill="none" stroke="#3a3a3a" stroke-width="0.75"/></svg>
<svg class="r" style="left:920.60px;top:267.90px;" width="11" height="9.4" viewBox="0 0 11 9.4"><path d="M1.8 7.4V3.4L5.8 1.2L9.8 3.4V7.4Z" fill="#eef4fc" stroke="#4a85ea" stroke-width="0.6"/><path d="M3 7.4V5H8.6V7.4" fill="#d6e4f8" stroke="#4a85ea" stroke-width="0.4"/><path d="M0.6 8.9L2.6 6.9M1 6.6H2.9V8.5" fill="none" stroke="#111" stroke-width="0.8"/></svg>
<span class="t" style="left:933.80px;top:269.00px;font-size:5.50px;line-height:6px;color:#3c3c3c;letter-spacing:-0.051px;transform:scaleX(1.0638);">Elevations</span>
<svg class="r" style="left:925.60px;top:279.36px;" width="11" height="8.6" viewBox="0 0 11 8.6"><path d="M0.9 7.6V3.2L5.2 0.9L9.6 3.2V7.6Z" fill="#fff" stroke="#4a85ea" stroke-width="0.6"/></svg>
<span class="t" style="left:938.80px;top:280.00px;font-size:5.50px;line-height:6px;color:#3c3c3c;letter-spacing:-0.057px;transform:scaleX(1.0638);">East Elevation</span>
<svg class="r" style="left:925.60px;top:290.82px;" width="11" height="8.6" viewBox="0 0 11 8.6"><path d="M0.9 7.6V3.2L5.2 0.9L9.6 3.2V7.6Z" fill="#fff" stroke="#4a85ea" stroke-width="0.6"/></svg>
<span class="t" style="left:938.80px;top:292.00px;font-size:5.50px;line-height:6px;color:#3c3c3c;letter-spacing:0.081px;transform:scaleX(1.0638);">North Elevation</span>
<svg class="r" style="left:925.60px;top:302.28px;" width="11" height="8.6" viewBox="0 0 11 8.6"><path d="M0.9 7.6V3.2L5.2 0.9L9.6 3.2V7.6Z" fill="#fff" stroke="#4a85ea" stroke-width="0.6"/></svg>
<span class="t" style="left:938.80px;top:303.00px;font-size:5.50px;line-height:6px;color:#3c3c3c;letter-spacing:0.069px;transform:scaleX(1.0638);">South Elevation</span>
<svg class="r" style="left:925.60px;top:313.74px;" width="11" height="8.6" viewBox="0 0 11 8.6"><path d="M0.9 7.6V3.2L5.2 0.9L9.6 3.2V7.6Z" fill="#fff" stroke="#4a85ea" stroke-width="0.6"/></svg>
<span class="t" style="left:938.80px;top:315.00px;font-size:5.50px;line-height:6px;color:#3c3c3c;letter-spacing:0.021px;transform:scaleX(1.0638);">West Elevation</span>
<svg class="r" style="left:920.60px;top:325.20px;" width="11" height="9.4" viewBox="0 0 11 9.4"><rect x="1.6" y="1" width="8.4" height="6.6" fill="#eef4fc" stroke="#4a85ea" stroke-width="0.6"/><path d="M5.6 2.6H8.6M5.6 4.2H8.6M5.6 5.8H8.6" stroke="#4a85ea" stroke-width="0.5"/><rect x="2.6" y="2.2" width="2" height="2" fill="#4a85ea"/><path d="M0.6 8.9L2.6 6.9M1 6.6H2.9V8.5" fill="none" stroke="#111" stroke-width="0.8"/></svg>
<span class="t" style="left:933.80px;top:326.00px;font-size:5.50px;line-height:6px;color:#3c3c3c;letter-spacing:0.056px;transform:scaleX(1.0638);">Interior Elevations</span>
<svg class="r" style="left:920.60px;top:336.66px;" width="11" height="9.4" viewBox="0 0 11 9.4"><rect x="1.6" y="1.4" width="8.4" height="6.2" fill="#eef4fc" stroke="#4a85ea" stroke-width="0.6"/><path d="M1.6 1.4H10V2.6H1.6Z" fill="#4a85ea"/><path d="M4 6.4C5 4.4 6.6 3.6 8.6 3.8" fill="none" stroke="#4a85ea" stroke-width="0.5"/><path d="M0.6 8.9L2.6 6.9M1 6.6H2.9V8.5" fill="none" stroke="#111" stroke-width="0.8"/></svg>
<span class="t" style="left:933.80px;top:338.00px;font-size:5.50px;line-height:6px;color:#3c3c3c;letter-spacing:0.044px;transform:scaleX(1.0638);">Worksheets</span>
<svg class="r" style="left:920.60px;top:348.12px;" width="11" height="9.4" viewBox="0 0 11 9.4"><circle cx="5.8" cy="4.4" r="3.6" fill="#eef4fc" stroke="#4a85ea" stroke-width="0.6"/><path d="M5.8 0.8V8M2.2 4.4H9.4" stroke="#4a85ea" stroke-width="0.5"/><path d="M0.6 8.9L2.6 6.9M1 6.6H2.9V8.5" fill="none" stroke="#111" stroke-width="0.8"/></svg>
<span class="t" style="left:933.80px;top:349.00px;font-size:5.50px;line-height:6px;color:#3c3c3c;letter-spacing:-0.060px;transform:scaleX(1.0638);">Details</span>
<svg class="r" style="left:920.60px;top:359.58px;" width="11" height="9.4" viewBox="0 0 11 9.4"><rect x="1.6" y="1.4" width="8.4" height="6.2" fill="#eef4fc" stroke="#4a85ea" stroke-width="0.6"/><path d="M1.6 1.4H10V2.6H1.6Z" fill="#4a85ea"/><path d="M5 4H8V6.6H5Z M5 4L6 3.4H8.8L8 4M8.8 3.4V6L8 6.6" fill="none" stroke="#4a85ea" stroke-width="0.4"/><path d="M0.6 8.9L2.6 6.9M1 6.6H2.9V8.5" fill="none" stroke="#111" stroke-width="0.8"/></svg>
<span class="t" style="left:933.80px;top:361.00px;font-size:5.50px;line-height:6px;color:#3c3c3c;letter-spacing:-0.042px;transform:scaleX(1.0638);">3D Documents</span>
<svg class="r" style="left:920.60px;top:370.84px;" width="11" height="9.2" viewBox="0 0 11 9.2"><path d="M1 1.2L6.6 0.9C8.6 0.9 9.4 1.6 9.4 2.6V6.2C9.4 7.4 8.6 8 6.8 8.2L1 7.8Z" fill="#fff" stroke="#4a85ea" stroke-width="0.6"/><path d="M7 1V8.2" stroke="#4a85ea" stroke-width="0.5"/></svg>
<span class="t" style="left:933.80px;top:372.00px;font-size:5.50px;line-height:6px;color:#3c3c3c;letter-spacing:-0.077px;transform:scaleX(1.0638);">Generic Perspective</span>
<svg class="r" style="left:920.60px;top:382.30px;" width="11" height="9.2" viewBox="0 0 11 9.2"><path d="M1 3L3.4 1H9.4V6L7 8.2H1ZM1 3H7V8.2M7 3L9.4 1" fill="#fff" stroke="#4a85ea" stroke-width="0.6" stroke-linejoin="round"/></svg>
<span class="t" style="left:933.80px;top:383.00px;font-size:5.50px;line-height:6px;color:#3c3c3c;letter-spacing:0.082px;transform:scaleX(1.0638);">Frontal Axonometry</span>
<svg class="r" style="left:914.40px;top:396.56px;" width="5" height="3.4" viewBox="0 0 5 3.4"><path d="M0.5 0.6L2.5 2.8L4.5 0.6" fill="none" stroke="#3a3a3a" stroke-width="0.75"/></svg>
<svg class="r" style="left:920.60px;top:393.96px;" width="11" height="8.8" viewBox="0 0 11 8.8"><path d="M0.8 7.8V0.9H4L4.8 2H9.8V7.8Z" fill="#f2f2f2" stroke="#666" stroke-width="0.6"/><path d="M0.8 2.6H9.8" stroke="#888" stroke-width="0.4"/></svg>
<span class="t" style="left:933.80px;top:395.00px;font-size:5.50px;line-height:6px;color:#3c3c3c;letter-spacing:-0.123px;transform:scaleX(1.0638);">Indexes</span>
<svg class="r" style="left:925.60px;top:405.62px;" width="11" height="8.4" viewBox="0 0 11 8.4"><rect x="0.8" y="0.9" width="8.8" height="6.4" fill="#fff" stroke="#4a85ea" stroke-width="0.6"/><rect x="6.6" y="5.2" width="3" height="2.1" fill="#4a85ea"/></svg>
<span class="t" style="left:938.80px;top:406.00px;font-size:5.50px;line-height:6px;color:#3c3c3c;letter-spacing:-0.002px;transform:scaleX(1.0638);">Sheet Index</span>
<svg class="r" style="left:921.50px;top:445.50px;" width="11" height="11" viewBox="0 0 11 11"><path d="M1.6 6V1.6H4V3H7.4V6Z" fill="#e8f0fb" stroke="#a9c6f2" stroke-width="0.6"/><path d="M5 6.4V9.8H9.4V6.4Z" fill="#f4f8fd" stroke="#a9c6f2" stroke-width="0.6"/><path d="M5.8 8.2H8.6" stroke="#a9c6f2" stroke-width="0.5"/></svg>
<svg class="r" style="left:938.20px;top:445.50px;" width="11" height="11" viewBox="0 0 11 11"><path d="M1.2 10V5.6H3.4V4.4H5.6V5.6H7.6V10Z" fill="#ddd" stroke="#555" stroke-width="0.6"/><circle cx="4.4" cy="7.6" r="1.4" fill="none" stroke="#555" stroke-width="0.5"/><circle cx="7.6" cy="3.6" r="2.6" fill="#eef4fc" stroke="#4a85ea" stroke-width="0.6"/><path d="M7.6 2.2V5M6.2 3.6H9" stroke="#4a85ea" stroke-width="0.6"/></svg>
<svg class="r" style="left:954.30px;top:445.50px;" width="11" height="11" viewBox="0 0 11 11"><path d="M1.2 10V3.2H3.6V4.6H9.2V10Z" fill="#f4f4f4" stroke="#555" stroke-width="0.6"/><circle cx="7" cy="3.2" r="2.5" fill="#eef4fc" stroke="#4a85ea" stroke-width="0.6"/><path d="M7 1.8V4.6M5.6 3.2H8.4" stroke="#4a85ea" stroke-width="0.6"/></svg>
<svg class="r" style="left:970.00px;top:445.50px;" width="11" height="11" viewBox="0 0 11 11"><path d="M1.8 7.4V1.8H5V3.4H9.8V7.4Z" fill="#eef4fc" stroke="#4a85ea" stroke-width="0.6"/><path d="M0.6 10L2.8 7.8M1.2 7.4H3.2V9.4" fill="none" stroke="#111" stroke-width="0.8"/></svg>
<svg class="r" style="left:985.70px;top:445.50px;" width="11" height="11" viewBox="0 0 11 11"><path d="M2.4 2.4L8.6 9M8.6 2.4L2.4 9" stroke="#f0a56e" stroke-width="0.7"/></svg>
<div class="r" style="left:905.90px;top:462.00px;width:93.10px;height:9.00px;background:#d5d5d5;"></div>
<svg class="r" style="left:908.50px;top:465.95px;" width="3.4" height="1.7" viewBox="0 0 3.4 1.7"><path d="M0 0H3.4L1.7 1.7Z" fill="#333"/></svg>
<span class="t" style="left:916.00px;top:464.00px;font-size:5.55px;line-height:6px;color:#3c3c3c;letter-spacing:0.012px;transform:scaleX(1.0638);">Properties</span>
<span class="t" style="left:934.60px;top:484.00px;font-size:5.55px;line-height:6px;color:#3c3c3c;letter-spacing:0.024px;transform:scaleX(1.0638);">No Selection.</span>
<div class="r" style="left:24.00px;top:519.00px;width:881.20px;height:10.30px;background:#f3f3f3;"></div>
<div class="r" style="left:0.00px;top:529.30px;width:999.00px;height:0.60px;background:#f8f8f8;"></div>
<svg class="r" style="left:25.50px;top:519.50px;" width="10" height="10" viewBox="0 0 10 10"><circle cx="5.6" cy="4.4" r="3.1" fill="none" stroke="#444" stroke-width="0.6"/><path d="M3.4 6.8L1 9.4" stroke="#444" stroke-width="0.8"/><path d="M1 4.4H5M2.2 3.4L1 4.4L2.2 5.4" fill="none" stroke="#444" stroke-width="0.6"/></svg>
<svg class="r" style="left:37.50px;top:519.50px;" width="10" height="10" viewBox="0 0 10 10"><circle cx="4.2" cy="4.4" r="3.1" fill="none" stroke="#b9b9b9" stroke-width="0.6"/><path d="M6.4 6.8L8.6 9.2" stroke="#b9b9b9" stroke-width="0.8"/><path d="M4.4 4.4H8.6M7.4 3.4L8.6 4.4L7.4 5.4" fill="none" stroke="#b9b9b9" stroke-width="0.6"/></svg>
<svg class="r" style="left:49.50px;top:519.50px;" width="10" height="10" viewBox="0 0 10 10"><circle cx="4.4" cy="4.4" r="3.2" fill="none" stroke="#444" stroke-width="0.6"/><path d="M6.8 6.8L9 9.2" stroke="#444" stroke-width="0.9"/><path d="M3.6 3.2V5.6L5.8 4.4Z" fill="#444"/></svg>
<div class="r" style="left:61.30px;top:520.00px;width:0.60px;height:8.40px;background:#bdbdbd;"></div>
<svg class="r" style="left:64.00px;top:519.50px;" width="10" height="10" viewBox="0 0 10 10"><ellipse cx="5" cy="4" rx="3.6" ry="2.2" fill="none" stroke="#444" stroke-width="0.6"/><path d="M5 6.2V8.4M4 7.4L5 8.6L6 7.4" fill="none" stroke="#444" stroke-width="0.5"/><circle cx="5" cy="4" r="0.7" fill="#444"/></svg>
<svg class="r" style="left:76.00px;top:519.50px;" width="10" height="10" viewBox="0 0 10 10"><circle cx="4.8" cy="2.4" r="0.9" fill="#444"/><path d="M4.8 3.4V6.4L3.4 8.8M4.8 6.4L6.2 8.8M3 5.2L4.8 4.2L6.6 5.2" fill="none" stroke="#444" stroke-width="0.6"/></svg>
<div class="r" style="left:87.90px;top:520.00px;width:0.60px;height:8.40px;background:#bdbdbd;"></div>
<svg class="r" style="left:90.00px;top:519.50px;" width="10" height="10" viewBox="0 0 10 10"><circle cx="4.6" cy="4.4" r="3.2" fill="none" stroke="#444" stroke-width="0.6"/><path d="M7 6.8L9.2 9.2" stroke="#444" stroke-width="0.9"/><path d="M2.8 2.6L6.4 6.2M6.4 2.6L2.8 6.2" stroke="#444" stroke-width="0.5"/></svg>
<span class="t" style="left:128.60px;top:521.00px;font-size:5.50px;line-height:6px;color:#9a9a9a;letter-spacing:-0.166px;transform:scaleX(1.0638);">N/A</span>
<svg class="r" style="left:163.73px;top:522.36px;" width="1.74" height="3.48" viewBox="0 0 1.74 3.48"><path d="M0 0V3.48L1.74 1.74Z" fill="#9a9a9a"/></svg>
<div class="r" style="left:169.70px;top:520.00px;width:0.60px;height:8.40px;background:#bdbdbd;"></div>
<svg class="r" style="left:173.00px;top:519.50px;" width="9" height="10" viewBox="0 0 9 10"><path d="M1.4 5L4 2.4L6.8 4.2L4.2 7Z" fill="none" stroke="#a6a6a6" stroke-width="0.55"/><path d="M5.4 6.4C6.6 6.4 7 7.4 6.2 8" fill="none" stroke="#a6a6a6" stroke-width="0.5"/></svg>
<span class="t" style="left:210.20px;top:521.00px;font-size:5.50px;line-height:6px;color:#9a9a9a;letter-spacing:0.022px;transform:scaleX(1.0638);">N/A</span>
<svg class="r" style="left:246.13px;top:522.36px;" width="1.74" height="3.48" viewBox="0 0 1.74 3.48"><path d="M0 0V3.48L1.74 1.74Z" fill="#9a9a9a"/></svg>
<div class="r" style="left:251.70px;top:520.00px;width:0.60px;height:8.40px;background:#bdbdbd;"></div>
<svg class="r" style="left:255.50px;top:521.00px;" width="10" height="6" viewBox="0 0 10 6"><rect x="0.6" y="1.2" width="8" height="3.2" fill="#fafafa" stroke="#444" stroke-width="0.55"/><path d="M2.6 1.2V2.4M4.6 1.2V2.4M6.6 1.2V2.4" stroke="#444" stroke-width="0.4"/></svg>
<span class="t" style="left:291.40px;top:521.00px;font-size:5.50px;line-height:6px;color:#4a4a4a;letter-spacing:-0.244px;transform:scaleX(1.0638);">1:100</span>
<svg class="r" style="left:327.93px;top:522.36px;" width="1.74" height="3.48" viewBox="0 0 1.74 3.48"><path d="M0 0V3.48L1.74 1.74Z" fill="#222"/></svg>
<div class="r" style="left:334.10px;top:520.00px;width:0.60px;height:8.40px;background:#bdbdbd;"></div>
<svg class="r" style="left:337.00px;top:519.80px;" width="9" height="9" viewBox="0 0 9 9"><path d="M1.2 3.2L3.2 1.6H7.6V5L5.6 6.8H1.2ZM1.2 3.2H5.6V6.8M5.6 3.2L7.6 1.6M1.2 5H5.6" fill="none" stroke="#444" stroke-width="0.55"/></svg>
<span class="t" style="left:364.40px;top:521.00px;font-size:5.50px;line-height:6px;color:#4a4a4a;letter-spacing:0.074px;transform:scaleX(1.0638);">02 Drafting</span>
<svg class="r" style="left:409.93px;top:522.36px;" width="1.74" height="3.48" viewBox="0 0 1.74 3.48"><path d="M0 0V3.48L1.74 1.74Z" fill="#222"/></svg>
<div class="r" style="left:415.50px;top:520.00px;width:0.60px;height:8.40px;background:#bdbdbd;"></div>
<svg class="r" style="left:419.50px;top:520.80px;" width="8" height="7" viewBox="0 0 8 7"><path d="M0.8 0.8H7.2V5.6H0.8Z" fill="none" stroke="#444" stroke-width="0.5"/><path d="M0.8 2.4H7.2M0.8 4H7.2M2.4 0.8V5.6M4 0.8V5.6M5.6 0.8V5.6" stroke="#444" stroke-width="0.6"/></svg>
<span class="t" style="left:443.80px;top:521.00px;font-size:5.50px;line-height:6px;color:#4a4a4a;letter-spacing:0.082px;transform:scaleX(1.0638);">Entire Model</span>
<svg class="r" style="left:491.73px;top:522.36px;" width="1.74" height="3.48" viewBox="0 0 1.74 3.48"><path d="M0 0V3.48L1.74 1.74Z" fill="#222"/></svg>
<div class="r" style="left:497.30px;top:520.00px;width:0.60px;height:8.40px;background:#bdbdbd;"></div>
<svg class="r" style="left:501.00px;top:520.00px;" width="6" height="9" viewBox="0 0 6 9"><path d="M1.4 0.8V4.6C1.4 6.4 4.4 6.4 4.4 4.6V0.8M2.9 6V8.2" fill="none" stroke="#444" stroke-width="0.6"/></svg>
<span class="t" style="left:516.80px;top:521.00px;font-size:5.50px;line-height:6px;color:#4a4a4a;letter-spacing:0.025px;transform:scaleX(1.0638);">03 Architectural 100</span>
<svg class="r" style="left:573.53px;top:522.36px;" width="1.74" height="3.48" viewBox="0 0 1.74 3.48"><path d="M0 0V3.48L1.74 1.74Z" fill="#222"/></svg>
<div class="r" style="left:579.10px;top:520.00px;width:0.60px;height:8.40px;background:#bdbdbd;"></div>
<svg class="r" style="left:582.50px;top:521.00px;" width="10" height="7" viewBox="0 0 10 7"><rect x="0.6" y="0.8" width="8.2" height="4.8" fill="#fafafa" stroke="#444" stroke-width="0.5"/><path d="M2 3.2H3.4M4.2 3.2H5.6M6.4 3.2H7.6" stroke="#444" stroke-width="0.5"/></svg>
<span class="t" style="left:601.80px;top:521.00px;font-size:5.50px;line-height:6px;color:#4a4a4a;transform:scaleX(1.0638);">03 Building Plans</span>
<svg class="r" style="left:654.93px;top:522.36px;" width="1.74" height="3.48" viewBox="0 0 1.74 3.48"><path d="M0 0V3.48L1.74 1.74Z" fill="#222"/></svg>
<div class="r" style="left:660.30px;top:520.00px;width:0.60px;height:8.40px;background:#bdbdbd;"></div>
<svg class="r" style="left:664.50px;top:520.00px;" width="9" height="9" viewBox="0 0 9 9"><path d="M0.8 1.4H4.2V3.6H0.8ZM4.2 2.4H6" fill="none" stroke="#444" stroke-width="0.55"/><path d="M3.6 4.6H7.4V8H3.6Z" fill="#666" stroke="#444" stroke-width="0.5"/></svg>
<span class="t" style="left:688.80px;top:521.00px;font-size:5.50px;line-height:6px;color:#4a4a4a;letter-spacing:-0.022px;transform:scaleX(1.0638);">No Overrides</span>
<svg class="r" style="left:736.73px;top:522.36px;" width="1.74" height="3.48" viewBox="0 0 1.74 3.48"><path d="M0 0V3.48L1.74 1.74Z" fill="#222"/></svg>
<div class="r" style="left:742.30px;top:520.00px;width:0.60px;height:8.40px;background:#bdbdbd;"></div>
<svg class="r" style="left:745.50px;top:519.80px;" width="9" height="9" viewBox="0 0 9 9"><path d="M4.4 1L7.6 6.6H1.2Z" fill="#f6f6f6" stroke="#666" stroke-width="0.5"/><path d="M2.4 6.6L1.4 8.2H7.4L6.4 6.6" fill="#ddd" stroke="#666" stroke-width="0.45"/></svg>
<span class="t" style="left:759.60px;top:521.00px;font-size:5.50px;line-height:6px;color:#4a4a4a;letter-spacing:-0.019px;transform:scaleX(1.0638);">00 Show All Elements</span>
<svg class="r" style="left:818.53px;top:522.36px;" width="1.74" height="3.48" viewBox="0 0 1.74 3.48"><path d="M0 0V3.48L1.74 1.74Z" fill="#222"/></svg>
<div class="r" style="left:824.10px;top:520.00px;width:0.60px;height:8.40px;background:#bdbdbd;"></div>
<svg class="r" style="left:827.50px;top:520.00px;" width="9" height="9" viewBox="0 0 9 9"><path d="M1 3H5.4V7.4H1Z" fill="#f6f6f6" stroke="#444" stroke-width="0.55"/><path d="M2.8 3V1.4H7.2V5.6H5.4" fill="none" stroke="#444" stroke-width="0.55"/></svg>
<span class="t" style="left:848.80px;top:521.00px;font-size:5.50px;line-height:6px;color:#4a4a4a;letter-spacing:0.016px;transform:scaleX(1.0638);">Simple Shading</span>
<svg class="r" style="left:899.73px;top:522.36px;" width="1.74" height="3.48" viewBox="0 0 1.74 3.48"><path d="M0 0V3.48L1.74 1.74Z" fill="#222"/></svg>
<svg class="r" style="left:907.50px;top:530.50px;" width="11" height="10" viewBox="0 0 11 10"><rect x="1" y="1.2" width="6.6" height="5" fill="#f4f4f4" stroke="#555" stroke-width="0.6"/><rect x="3" y="3.6" width="6.6" height="5" fill="#f4f4f4" stroke="#555" stroke-width="0.6"/><path d="M3 4.6H9.6" stroke="#555" stroke-width="0.5"/></svg>
<div class="r" style="left:919.20px;top:530.00px;width:0.50px;height:11.00px;background:#dedede;"></div>
<span class="t" style="left:927.60px;top:531.00px;font-size:6.25px;line-height:7px;color:#a9a9a9;letter-spacing:0.018px;transform:scaleX(1.0638);">GRAPHISOFT</span>
<span class="t" style="left:973.00px;top:532.00px;font-size:5.92px;line-height:6px;color:#cfcfcf;letter-spacing:-0.094px;transform:scaleX(1.0638);">ID</span>
<div class="r" style="left:985.80px;top:530.00px;width:0.50px;height:11.00px;background:#dedede;"></div>
</div></body></html>
